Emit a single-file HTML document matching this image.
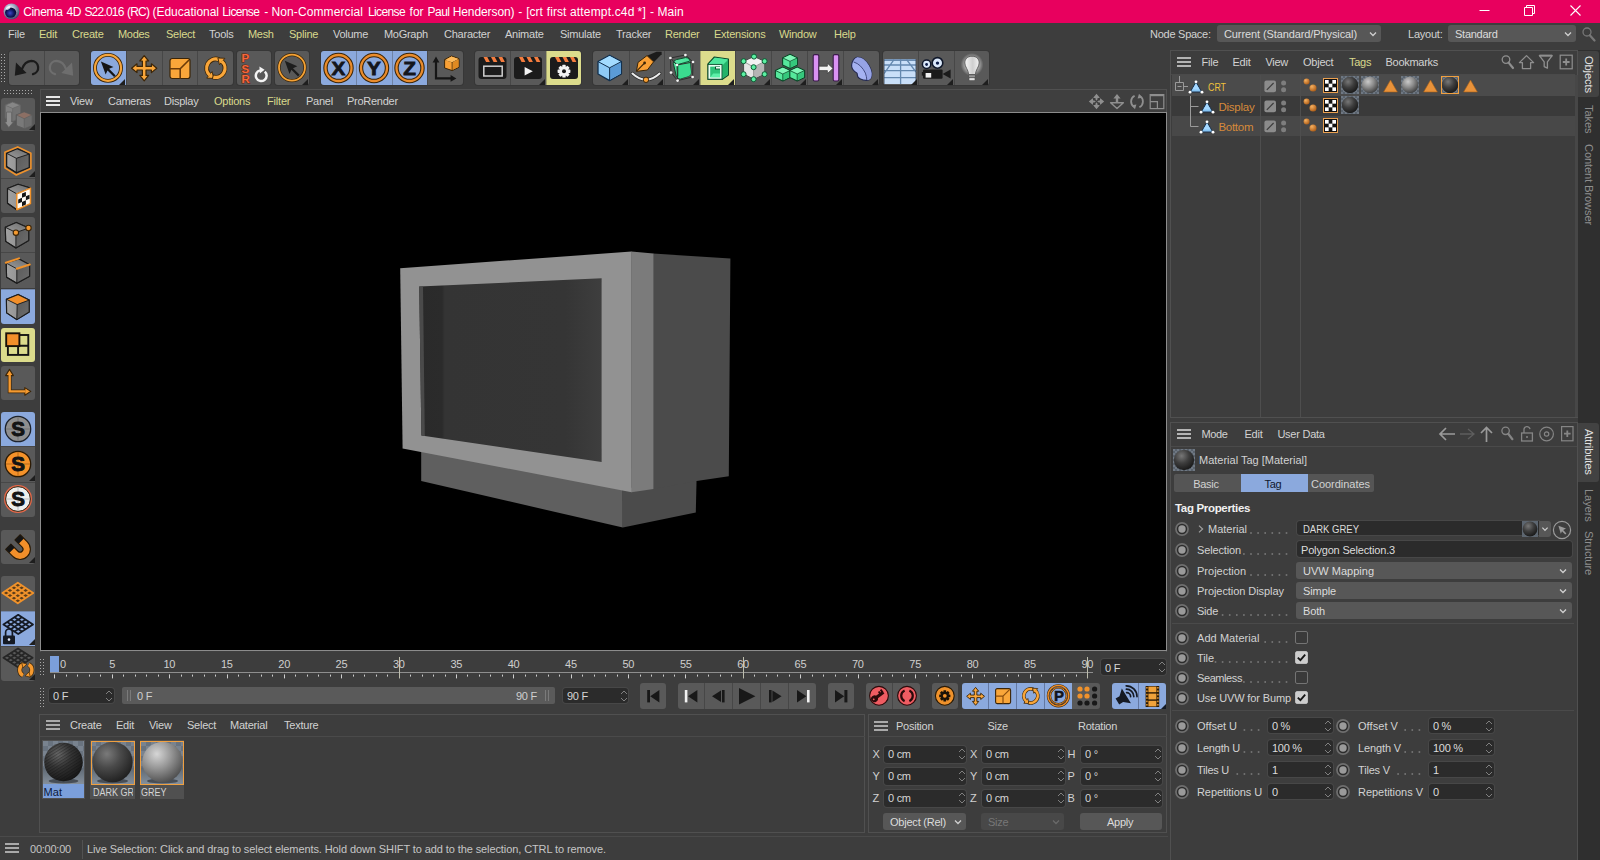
<!DOCTYPE html>
<html><head><meta charset="utf-8"><title>Cinema 4D</title>
<style>
html,body{margin:0;padding:0;}
body{width:1600px;height:860px;overflow:hidden;background:#3d3d3d;position:relative;font-family:"Liberation Sans",sans-serif;font-size:11px;color:#d2d2d2;}
div,span,svg{position:absolute;display:block;}
span{white-space:nowrap;}
</style></head><body>
<div style="left:0px;top:0px;width:1600px;height:23px;background:#e8005e;"></div>
<svg style="left:3px;top:3px;" width="17" height="17" viewBox="0 0 17 17">
<defs><radialGradient id="lg1" cx="40%" cy="35%" r="70%"><stop offset="0" stop-color="#ffffff"/><stop offset="0.35" stop-color="#b9c1d8"/><stop offset="1" stop-color="#3a3f63"/></radialGradient>
<radialGradient id="lg2" cx="45%" cy="55%" r="60%"><stop offset="0" stop-color="#3c46c8"/><stop offset="0.6" stop-color="#10145a"/><stop offset="1" stop-color="#05061e"/></radialGradient></defs>
<circle cx="8.5" cy="8.5" r="8" fill="url(#lg1)"/>
<ellipse cx="7.6" cy="9.6" rx="5.6" ry="5.2" fill="url(#lg2)"/>
<ellipse cx="5.2" cy="5" rx="2.6" ry="1.4" fill="#fff" opacity="0.8" transform="rotate(-30 5.2 5)"/>
</svg>
<span style="left:23.2px;top:3.5px;line-height:16px;font-size:12px;color:#ffffff;letter-spacing:-0.341px;">Cinema</span>
<span style="left:66.6px;top:3.5px;line-height:16px;font-size:12px;color:#ffffff;letter-spacing:-0.420px;">4D</span>
<span style="left:84.4px;top:3.5px;line-height:16px;font-size:12px;color:#ffffff;letter-spacing:-0.787px;">S22.016</span>
<span style="left:126.9px;top:3.5px;line-height:16px;font-size:12px;color:#ffffff;letter-spacing:-0.756px;">(RC)</span>
<span style="left:152.5px;top:3.5px;line-height:16px;font-size:12px;color:#ffffff;letter-spacing:-0.017px;">(Educational</span>
<span style="left:222.3px;top:3.5px;line-height:16px;font-size:12px;color:#ffffff;letter-spacing:-0.623px;">License</span>
<span style="left:264.2px;top:3.5px;line-height:16px;font-size:12px;color:#ffffff;letter-spacing:-0.597px;">-</span>
<span style="left:271.5px;top:3.5px;line-height:16px;font-size:12px;color:#ffffff;letter-spacing:0.106px;">Non-Commercial</span>
<span style="left:367.9px;top:3.5px;line-height:16px;font-size:12px;color:#ffffff;letter-spacing:-0.608px;">License</span>
<span style="left:409.6px;top:3.5px;line-height:16px;font-size:12px;color:#ffffff;letter-spacing:-0.002px;">for</span>
<span style="left:427.5px;top:3.5px;line-height:16px;font-size:12px;color:#ffffff;letter-spacing:-0.504px;">Paul</span>
<span style="left:452.7px;top:3.5px;line-height:16px;font-size:12px;color:#ffffff;letter-spacing:-0.090px;">Henderson)</span>
<span style="left:518.3px;top:3.5px;line-height:16px;font-size:12px;color:#ffffff;letter-spacing:-0.597px;">-</span>
<span style="left:526.2px;top:3.5px;line-height:16px;font-size:12px;color:#ffffff;letter-spacing:0.034px;">[crt</span>
<span style="left:546.75px;top:3.5px;line-height:16px;font-size:12px;color:#ffffff;letter-spacing:0.084px;">first</span>
<span style="left:570px;top:3.5px;line-height:16px;font-size:12px;color:#ffffff;letter-spacing:0.163px;">attempt.c4d</span>
<span style="left:637.5px;top:3.5px;line-height:16px;font-size:12px;color:#ffffff;letter-spacing:0.373px;">*]</span>
<span style="left:650px;top:3.5px;line-height:16px;font-size:12px;color:#ffffff;letter-spacing:-0.597px;">-</span>
<span style="left:657.5px;top:3.5px;line-height:16px;font-size:12px;color:#ffffff;letter-spacing:0.060px;">Main</span>
<svg style="left:1474px;top:0px;" width="126" height="23" viewBox="0 0 126 23">
<path d="M5.5 10.5 H15.5" stroke="#fff" stroke-width="1" fill="none"/>
<path d="M50.5 7.5 h8 v8 h-8 z M52.5 7.5 v-2 h8 v8 h-2" stroke="#fff" stroke-width="1" fill="none"/>
<path d="M96.5 5.5 l10 10 M106.5 5.5 l-10 10" stroke="#fff" stroke-width="1.1" fill="none"/>
</svg>
<span style="left:8px;top:26.0px;line-height:16px;font-size:11px;color:#d2d2d2;letter-spacing:-0.199px;">File</span>
<span style="left:39px;top:26.0px;line-height:16px;font-size:11px;color:#d9d98c;letter-spacing:-0.213px;">Edit</span>
<span style="left:72px;top:26.0px;line-height:16px;font-size:11px;color:#d9d98c;letter-spacing:-0.248px;">Create</span>
<span style="left:118px;top:26.0px;line-height:16px;font-size:11px;color:#d9d98c;letter-spacing:-0.297px;">Modes</span>
<span style="left:166px;top:26.0px;line-height:16px;font-size:11px;color:#d9d98c;letter-spacing:-0.229px;">Select</span>
<span style="left:209px;top:26.0px;line-height:16px;font-size:11px;color:#d2d2d2;letter-spacing:-0.231px;">Tools</span>
<span style="left:248px;top:26.0px;line-height:16px;font-size:11px;color:#d9d98c;letter-spacing:-0.303px;">Mesh</span>
<span style="left:289px;top:26.0px;line-height:16px;font-size:11px;color:#d9d98c;letter-spacing:-0.229px;">Spline</span>
<span style="left:333px;top:26.0px;line-height:16px;font-size:11px;color:#d2d2d2;letter-spacing:-0.275px;">Volume</span>
<span style="left:384px;top:26.0px;line-height:16px;font-size:11px;color:#d2d2d2;letter-spacing:-0.295px;">MoGraph</span>
<span style="left:444px;top:26.0px;line-height:16px;font-size:11px;color:#d2d2d2;letter-spacing:-0.241px;">Character</span>
<span style="left:505px;top:26.0px;line-height:16px;font-size:11px;color:#d2d2d2;letter-spacing:-0.259px;">Animate</span>
<span style="left:560px;top:26.0px;line-height:16px;font-size:11px;color:#d2d2d2;letter-spacing:-0.241px;">Simulate</span>
<span style="left:616px;top:26.0px;line-height:16px;font-size:11px;color:#d2d2d2;letter-spacing:-0.237px;">Tracker</span>
<span style="left:665px;top:26.0px;line-height:16px;font-size:11px;color:#d9d98c;letter-spacing:-0.271px;">Render</span>
<span style="left:714px;top:26.0px;line-height:16px;font-size:11px;color:#d9d98c;letter-spacing:-0.242px;">Extensions</span>
<span style="left:779px;top:26.0px;line-height:16px;font-size:11px;color:#d9d98c;letter-spacing:-0.293px;">Window</span>
<span style="left:834px;top:26.0px;line-height:16px;font-size:11px;color:#d9d98c;letter-spacing:-0.254px;">Help</span>
<span style="left:1150px;top:26.0px;line-height:16px;font-size:11px;color:#d2d2d2;letter-spacing:-0.260px;">Node Space:</span>
<div style="left:1217px;top:25px;width:164px;height:17px;background:#575757;border-radius:3px;"></div>
<span style="left:1224px;top:26.0px;line-height:16px;font-size:11px;color:#dcdcdc;letter-spacing:-0.101px;">Current (Standard/Physical)</span>
<svg style="left:1366.5px;top:28.5px;" width="12" height="10" viewBox="0 0 12 10"><path d="M3.0 3.5 L6 6.5 L9.0 3.5" fill="none" stroke="#d0d0d0" stroke-width="1.3"/></svg>
<span style="left:1408px;top:26.0px;line-height:16px;font-size:11px;color:#d2d2d2;letter-spacing:-0.232px;">Layout:</span>
<div style="left:1448px;top:25px;width:128px;height:17px;background:#575757;border-radius:3px;"></div>
<span style="left:1455px;top:26.0px;line-height:16px;font-size:11px;color:#dcdcdc;letter-spacing:-0.251px;">Standard</span>
<svg style="left:1561.5px;top:28.5px;" width="12" height="10" viewBox="0 0 12 10"><path d="M3.0 3.5 L6 6.5 L9.0 3.5" fill="none" stroke="#d0d0d0" stroke-width="1.3"/></svg>
<svg style="left:1581px;top:26px;" width="16" height="16" viewBox="0 0 16 16"><circle cx="6" cy="6" r="4" fill="none" stroke="#777" stroke-width="1.3"/><path d="M8.8 9.2 L13.5 14.5" stroke="#777" stroke-width="2.2" stroke-linecap="round"/></svg>
<svg style="left:1px;top:54px;" width="6" height="30" viewBox="0 0 6 30"><defs><pattern id="dp1" width="3" height="3" patternUnits="userSpaceOnUse"><rect width="1" height="1" fill="#a8a8a8"/></pattern></defs><rect width="6" height="30" fill="url(#dp1)"/></svg>
<div style="left:9px;top:51px;width:70px;height:34px;background:#595959;border-radius:3px;box-shadow:0 0 0 1px #373737;"></div>
<div style="left:91px;top:51px;width:142px;height:34px;background:#595959;border-radius:3px;box-shadow:0 0 0 1px #373737;"></div>
<div style="left:237px;top:51px;width:34px;height:34px;background:#595959;border-radius:3px;box-shadow:0 0 0 1px #373737;"></div>
<div style="left:275px;top:51px;width:34px;height:34px;background:#595959;border-radius:3px;box-shadow:0 0 0 1px #373737;"></div>
<div style="left:321px;top:51px;width:142px;height:34px;background:#595959;border-radius:3px;box-shadow:0 0 0 1px #373737;"></div>
<div style="left:475px;top:51px;width:106px;height:34px;background:#595959;border-radius:3px;box-shadow:0 0 0 1px #373737;"></div>
<div style="left:593px;top:51px;width:286px;height:34px;background:#595959;border-radius:3px;box-shadow:0 0 0 1px #373737;"></div>
<div style="left:883px;top:51px;width:106px;height:34px;background:#595959;border-radius:3px;box-shadow:0 0 0 1px #373737;"></div>
<svg style="left:10px;top:51px;" width="34" height="34" viewBox="0 0 34 34"><path d="M12 18 Q14.6 10.4 21.4 9.8 A6.8 6.8 0 0 1 23 23.2" fill="none" stroke="#1b1b1b" stroke-width="2.3" stroke-linecap="round"/>
<path d="M4.8 24.8 L6 11.6 L16.6 22 Z" fill="#1b1b1b"/></svg>
<div style="left:44px;top:51px;width:1px;height:34px;background:#474747;"></div>
<svg style="left:44px;top:51px;" width="34" height="34" viewBox="0 0 34 34"><path d="M22 18 Q19.4 10.4 12.6 9.8 A6.8 6.8 0 0 0 11 23.2" fill="none" stroke="#6e6e6e" stroke-width="2.3" stroke-linecap="round"/>
<path d="M29.2 24.8 L28 11.6 L17.4 22 Z" fill="#6e6e6e"/></svg>
<div style="left:91px;top:51px;width:34.5px;height:34px;background:#8ba9dd;border-radius:3px 0px 0px 3px;"></div>
<svg style="left:91px;top:51px;" width="34" height="34" viewBox="0 0 34 34"><circle cx="17" cy="16.9" r="13" fill="none" stroke="#3b2508" stroke-width="3.9"/>
<circle cx="17" cy="16.9" r="13" fill="none" stroke="#f5a53c" stroke-width="2.2"/><path d="M9.90 10.40 L22.44 15.94 L18.08 17.79 L24.68 24.39 L23.10 25.98 L16.50 19.38 L14.65 23.60 Z" fill="#151515"/></svg>
<svg style="left:118.5px;top:79px;" width="6" height="6" viewBox="0 0 6 6"><path d="M6 0 V6 H0 Z" fill="#1e1e1e"/></svg>
<div style="left:126px;top:51px;width:1px;height:34px;background:#474747;"></div>
<svg style="left:127px;top:51px;" width="34" height="34" viewBox="0 0 34 34"><g transform="translate(0.2,0.2)"><path d="M17 4.4 L21.4 9.8 L18.8 9.8 L18.8 15.2 L24.2 15.2 L24.2 12.6 L29.6 17 L24.2 21.4 L24.2 18.8 L18.8 18.8 L18.8 24.2 L21.4 24.2 L17 29.6 L12.6 24.2 L15.2 24.2 L15.2 18.8 L9.8 18.8 L9.8 21.4 L4.4 17 L9.8 12.6 L9.8 15.2 L15.2 15.2 L15.2 9.8 L12.6 9.8 Z" fill="#f9a63a" stroke="#3b2508" stroke-width="1.2" stroke-linejoin="round"/></g></svg>
<div style="left:162px;top:51px;width:1px;height:34px;background:#474747;"></div>
<svg style="left:162px;top:51px;" width="34" height="34" viewBox="0 0 34 34"><rect x="8" y="7.5" width="20" height="20" rx="2.2" fill="#f9a63a" stroke="#3b2508" stroke-width="1.2"/>
<path d="M8 17.8 H18.2 V27.5 M18.2 17.8 L27 9" fill="none" stroke="#6a3a08" stroke-width="1.6"/></svg>
<div style="left:197px;top:51px;width:1px;height:34px;background:#474747;"></div>
<svg style="left:198px;top:51px;" width="34" height="34" viewBox="0 0 34 34"><path d="M21.10 8.61 A9.2 9.2 0 0 0 11.89 24.25" fill="none" stroke="#3b2508" stroke-width="4.7"/><path d="M15.72 27.46 L8.73 27.08 L14.13 20.64 Z" fill="#f9a63a" stroke="#3b2508" stroke-width="0.90" stroke-linejoin="round"/><path d="M20.34 8.36 A9.2 9.2 0 0 0 11.89 24.25" fill="none" stroke="#f9a63a" stroke-width="3.3"/><path d="M14.50 25.79 A9.2 9.2 0 0 0 23.71 10.15" fill="none" stroke="#3b2508" stroke-width="4.7"/><path d="M19.88 6.94 L26.87 7.32 L21.47 13.76 Z" fill="#f9a63a" stroke="#3b2508" stroke-width="0.90" stroke-linejoin="round"/><path d="M15.26 26.04 A9.2 9.2 0 0 0 23.71 10.15" fill="none" stroke="#f9a63a" stroke-width="3.3"/></svg>
<svg style="left:237px;top:51px;" width="34" height="34" viewBox="0 0 34 34"><g font-family="Liberation Sans" font-weight="bold" font-size="11.6" fill="#f4683c" stroke="#6a200a" stroke-width="1.1" paint-order="stroke">
<text x="4.6" y="11.2">P</text><text x="4.6" y="21.6">S</text><text x="4.4" y="31.8">R</text></g>
<path d="M27.8 20.6 A5.4 5.4 0 1 1 23 19.4" fill="none" stroke="#f4f4f4" stroke-width="2.5"/>
<path d="M22.4 15.6 L27.6 18.8 L22.8 22.4 Z" fill="#f4f4f4"/></svg>
<svg style="left:275px;top:51px;" width="34" height="34" viewBox="0 0 34 34"><circle cx="17" cy="16.6" r="13" fill="none" stroke="#3b2508" stroke-width="3.2"/>
<circle cx="17" cy="16.6" r="13" fill="none" stroke="#f5a235" stroke-width="1.8"/><path d="M9.80 9.80 L22.34 15.34 L17.98 17.19 L24.58 23.79 L23.00 25.38 L16.40 18.78 L14.55 23.00 Z" fill="#1d1d1d"/></svg>
<svg style="left:302px;top:79px;" width="6" height="6" viewBox="0 0 6 6"><path d="M6 0 V6 H0 Z" fill="#1e1e1e"/></svg>
<div style="left:321px;top:51px;width:35px;height:34px;background:#8ba9dd;border-radius:3px 0px 0px 3px;"></div>
<svg style="left:322px;top:51px;" width="34" height="34" viewBox="0 0 34 34"><circle cx="16.5" cy="17" r="13" fill="none" stroke="#3b2508" stroke-width="4.4"/>
<circle cx="16.5" cy="17" r="13" fill="none" stroke="#ea8c2c" stroke-width="2.3"/>
<g transform="translate(16.5,23.7) scale(1.12,1)"><text x="0" y="0" text-anchor="middle" font-family="Liberation Sans" font-weight="bold" font-size="18.5" fill="#14161c" stroke="#14161c" stroke-width="0.8">X</text></g></svg>
<div style="left:356px;top:51px;width:36px;height:34px;background:#8ba9dd;border-radius:0px 0px 0px 0px;"></div>
<div style="left:356px;top:51px;width:1px;height:34px;background:rgba(60,60,60,0.35);"></div>
<svg style="left:357px;top:51px;" width="34" height="34" viewBox="0 0 34 34"><circle cx="17" cy="17" r="13" fill="none" stroke="#3b2508" stroke-width="4.4"/>
<circle cx="17" cy="17" r="13" fill="none" stroke="#ea8c2c" stroke-width="2.3"/>
<g transform="translate(17,23.7) scale(1.12,1)"><text x="0" y="0" text-anchor="middle" font-family="Liberation Sans" font-weight="bold" font-size="18.5" fill="#14161c" stroke="#14161c" stroke-width="0.8">Y</text></g></svg>
<div style="left:392px;top:51px;width:35px;height:34px;background:#8ba9dd;border-radius:0px 0px 0px 0px;"></div>
<div style="left:392px;top:51px;width:1px;height:34px;background:rgba(60,60,60,0.35);"></div>
<svg style="left:392px;top:51px;" width="34" height="34" viewBox="0 0 34 34"><circle cx="17.5" cy="17" r="13" fill="none" stroke="#3b2508" stroke-width="4.4"/>
<circle cx="17.5" cy="17" r="13" fill="none" stroke="#ea8c2c" stroke-width="2.3"/>
<g transform="translate(17.5,23.7) scale(1.12,1)"><text x="0" y="0" text-anchor="middle" font-family="Liberation Sans" font-weight="bold" font-size="18.5" fill="#14161c" stroke="#14161c" stroke-width="0.8">Z</text></g></svg>
<div style="left:427px;top:51px;width:1px;height:34px;background:#474747;"></div>
<svg style="left:428px;top:51px;" width="34" height="34" viewBox="0 0 34 34"><path d="M8 10 V27.4 H24" fill="none" stroke="#161616" stroke-width="2.2"/>
<path d="M4.6 11.4 L8 5.6 L11.4 11.4 Z M22.6 24 L28.4 27.4 L22.6 30.8 Z" fill="#161616"/>
<path d="M16.6 8.6 L23.4 5 L31 7.6 L31 16.2 L24.2 19.6 L16.6 17 Z" fill="#f9a035" stroke="#3b2508" stroke-width="1"/>
<path d="M16.6 8.6 L24.2 11 L31 7.6 M24.2 11 V19.6" fill="none" stroke="#3b2508" stroke-width="0.9"/>
<path d="M17.1 9.2 L24 11.3 L30.5 8 L23.4 5.6 Z" fill="#fdb95a"/>
<path d="M24.7 11.5 L30.5 8.6 V15.9 L24.7 18.8 Z" fill="#e08a22"/></svg>
<svg style="left:476px;top:51px;" width="34" height="34" viewBox="0 0 34 34"><rect x="2.5" y="6" width="28" height="22" rx="3" fill="#1b1b1b"/><path d="M7.5 6 h3.8 l2.6 5 h-3.8 Z" fill="#f47c3e"/><path d="M15.0 6 h3.8 l2.6 5 h-3.8 Z" fill="#f47c3e"/><path d="M22.5 6 h3.8 l2.6 5 h-3.8 Z" fill="#f47c3e"/><rect x="7.8" y="15.2" width="18.4" height="9.8" fill="none" stroke="#cfcfcf" stroke-width="1.5"/></svg>
<div style="left:510px;top:51px;width:1px;height:34px;background:#474747;"></div>
<svg style="left:511px;top:51px;" width="34" height="34" viewBox="0 0 34 34"><rect x="3" y="6" width="28" height="22" rx="3" fill="#1b1b1b"/><path d="M8 6 h3.8 l2.6 5 h-3.8 Z" fill="#f47c3e"/><path d="M15.5 6 h3.8 l2.6 5 h-3.8 Z" fill="#f47c3e"/><path d="M23 6 h3.8 l2.6 5 h-3.8 Z" fill="#f47c3e"/><path d="M13.6 16 V24.6 L21.8 20.3 Z" fill="#f2f2f2"/></svg>
<svg style="left:539px;top:79px;" width="6" height="6" viewBox="0 0 6 6"><path d="M6 0 V6 H0 Z" fill="#1e1e1e"/></svg>
<div style="left:546px;top:51px;width:35px;height:34px;background:#dcdc8c;border-radius:0px 3px 3px 0px;"></div>
<div style="left:546px;top:51px;width:1px;height:34px;background:rgba(60,60,60,0.35);"></div>
<svg style="left:546px;top:51px;" width="34" height="34" viewBox="0 0 34 34"><rect x="4" y="6" width="28" height="22" rx="3" fill="#1b1b1b"/><path d="M9 6 h3.8 l2.6 5 h-3.8 Z" fill="#f47c3e"/><path d="M16.5 6 h3.8 l2.6 5 h-3.8 Z" fill="#f47c3e"/><path d="M24 6 h3.8 l2.6 5 h-3.8 Z" fill="#f47c3e"/><g transform="translate(18,20.2)"><g fill="#f4f4f4"><rect x="-1.7" y="-6.4" width="3.4" height="12.8" rx="0.6" transform="rotate(0)"/><rect x="-1.7" y="-6.4" width="3.4" height="12.8" rx="0.6" transform="rotate(45)"/><rect x="-1.7" y="-6.4" width="3.4" height="12.8" rx="0.6" transform="rotate(90)"/><rect x="-1.7" y="-6.4" width="3.4" height="12.8" rx="0.6" transform="rotate(135)"/><circle r="4.7"/></g><circle r="2" fill="#1b1b1b"/></g></svg>
<svg style="left:594px;top:51px;" width="34" height="34" viewBox="0 0 34 34"><path d="M15.6 4.2 L27.4 10.6 V23 L15.6 29.6 L4 23 V10.6 Z" fill="#8fcbf7" stroke="#12304e" stroke-width="1.3" stroke-linejoin="round"/>
<path d="M15.6 4.9 L26.6 10.8 L15.6 16.6 L4.8 10.8 Z" fill="#a3dbff"/>
<path d="M15.9 17.2 L26.8 11.5 V22.6 L15.9 28.7 Z" fill="#5b9bd6"/>
<path d="M4 10.6 L15.6 16.8 L27.4 10.6 M15.6 16.8 V29.4" fill="none" stroke="#12304e" stroke-width="1"/></svg>
<svg style="left:622px;top:79px;" width="6" height="6" viewBox="0 0 6 6"><path d="M6 0 V6 H0 Z" fill="#1e1e1e"/></svg>
<div style="left:629px;top:51px;width:1px;height:34px;background:#474747;"></div>
<svg style="left:630px;top:51px;" width="34" height="34" viewBox="0 0 34 34"><path d="M2.4 22.6 Q16 35 29.6 22.6" fill="none" stroke="#2a2a2a" stroke-width="3.4" stroke-linecap="round"/>
<path d="M2.4 22.6 Q16 35 29.6 22.6" fill="none" stroke="#ececec" stroke-width="2" stroke-linecap="round"/>
<circle cx="16" cy="28.8" r="2.7" fill="#f9a035" stroke="#3b2508" stroke-width="1"/>
<path d="M17 4.8 L26.5 0.8 L31.6 0.8 L31.6 3.2 L24 11 Z" fill="#1b1b1b"/>
<path d="M6.4 20.4 L8 11.4 L17 4.6 L23.6 10.8 L17.4 19 Z" fill="#f9a035" stroke="#3b2508" stroke-width="1" stroke-linejoin="round"/>
<path d="M6.6 20.2 L14 12.6" stroke="#3b2508" stroke-width="1.2"/>
<circle cx="14.6" cy="12" r="1.4" fill="#3b2508"/></svg>
<svg style="left:657px;top:79px;" width="6" height="6" viewBox="0 0 6 6"><path d="M6 0 V6 H0 Z" fill="#1e1e1e"/></svg>
<div style="left:664px;top:51px;width:1px;height:34px;background:#474747;"></div>
<svg style="left:665px;top:51px;" width="34" height="34" viewBox="0 0 34 34"><defs><linearGradient id="sdg" x1="0" y1="0" x2="1" y2="1"><stop offset="0" stop-color="#62efac"/><stop offset="1" stop-color="#2fcf84"/></linearGradient></defs>
<path d="M8.4 12.6 Q8 9.4 11.4 8.6 L20.6 6.6 Q24.2 6.2 24.8 9.4 L26 21 Q26.2 24.2 23.2 25.2 L15.6 27.6 Q12.2 28.2 11.2 24.8 Z" fill="url(#sdg)" stroke="#0c4a2b" stroke-width="1"/>
<path d="M12.8 14 Q13.4 12.8 15 12.4 L24.8 10 L26 21 Q26.2 24.2 23.2 25.2 L15.6 27.6 Q13.4 28 12.8 25.6 Z" fill="#3bdb8f"/>
<path d="M9 11.2 Q11.4 13.6 13.4 13.4 L24.6 10.2 M12.8 14 V25.4" fill="none" stroke="#0c4a2b" stroke-width="0.9"/>
<path d="M5.4 7 L20.4 4 L28 11 L12 14 Z M5.4 7 L6 21.6 L12.6 29.6 L12 14 M12.6 29.6 L27.6 26 L28 11" fill="none" stroke="#2e2e2e" stroke-width="1"/><circle cx="5.4" cy="7" r="1.35" fill="#f4f4f4"/><circle cx="20.4" cy="4" r="1.35" fill="#f4f4f4"/><circle cx="28" cy="11" r="1.35" fill="#f4f4f4"/><circle cx="12" cy="14" r="1.35" fill="#f4f4f4"/><circle cx="6" cy="21.6" r="1.35" fill="#f4f4f4"/><circle cx="12.6" cy="29.6" r="1.35" fill="#f4f4f4"/><circle cx="27.6" cy="26" r="1.35" fill="#f4f4f4"/></svg>
<svg style="left:693px;top:79px;" width="6" height="6" viewBox="0 0 6 6"><path d="M6 0 V6 H0 Z" fill="#1e1e1e"/></svg>
<div style="left:700px;top:51px;width:35px;height:34px;background:#dcdc8c;border-radius:0px 0px 0px 0px;"></div>
<div style="left:700px;top:51px;width:1px;height:34px;background:rgba(60,60,60,0.35);"></div>
<svg style="left:700px;top:51px;" width="34" height="34" viewBox="0 0 34 34"><path d="M8 13 L14.4 6 L28.4 8 L28.4 24 L22 28.4 L8 28.4 Z" fill="#47df95" stroke="#0c4a2b" stroke-width="1.2" stroke-linejoin="round"/>
<path d="M8.6 13 L14.6 6.7 L27.6 8.5 L21.8 14.4 Z" fill="#4fe79d"/>
<path d="M22.4 14.6 L28 9 V23.8 L22.4 27.6 Z" fill="#24b36a"/>
<rect x="8" y="13.4" width="14" height="14.8" fill="#e9fff3" stroke="#0c4a2b" stroke-width="0.9"/>
<rect x="10.2" y="15.6" width="9.8" height="10.6" fill="#2fc47a"/>
<path d="M10.2 26.2 L13.2 22.4 H20 V26.2 Z" fill="#5cf0a8"/>
<path d="M15 15.6 V18.4 H20 V15.6 Z" fill="#0c4a2b"/><path d="M16 16 h4 v1.6 h-4z" fill="#e9fff3"/></svg>
<svg style="left:728px;top:79px;" width="6" height="6" viewBox="0 0 6 6"><path d="M6 0 V6 H0 Z" fill="#1e1e1e"/></svg>
<div style="left:735px;top:51px;width:1px;height:34px;background:#474747;"></div>
<svg style="left:736px;top:51px;" width="34" height="34" viewBox="0 0 34 34"><path d="M18 5.6 L28.6 10.4 V23 L17.6 28.2 L7.6 23 V10.4 Z" fill="#e4e4e4" stroke="#4a4a4a" stroke-width="1"/>
<path d="M17.6 16.4 L28.2 11 V22.8 L17.6 27.8 Z" fill="#b5b5b5"/>
<path d="M18 6.2 L27.6 10.6 L17.6 15.8 L8.4 10.6 Z" fill="#f2f2f2"/>
<path d="M7.6 10.4 L17.6 16.2 L28.6 10.4 M17.6 16.2 V28" fill="none" stroke="#8a8a8a" stroke-width="0.8"/><circle cx="18" cy="5.6" r="2.5" fill="#5cf0a3" stroke="#0d5a33" stroke-width="1"/><circle cx="7.6" cy="10.2" r="2.5" fill="#5cf0a3" stroke="#0d5a33" stroke-width="1"/><circle cx="28.6" cy="10.2" r="2.5" fill="#5cf0a3" stroke="#0d5a33" stroke-width="1"/><circle cx="17.6" cy="16.2" r="2.5" fill="#5cf0a3" stroke="#0d5a33" stroke-width="1"/><circle cx="7.6" cy="23.2" r="2.5" fill="#5cf0a3" stroke="#0d5a33" stroke-width="1"/><circle cx="28.6" cy="23.2" r="2.5" fill="#5cf0a3" stroke="#0d5a33" stroke-width="1"/><circle cx="17.6" cy="28.2" r="2.5" fill="#5cf0a3" stroke="#0d5a33" stroke-width="1"/></svg>
<svg style="left:764px;top:79px;" width="6" height="6" viewBox="0 0 6 6"><path d="M6 0 V6 H0 Z" fill="#1e1e1e"/></svg>
<div style="left:771px;top:51px;width:1px;height:34px;background:#474747;"></div>
<svg style="left:772px;top:51px;" width="34" height="34" viewBox="0 0 34 34"><path d="M18 3.37 L25.4 6.885 V13.915000000000001 L18 17.43 L10.6 13.915000000000001 V6.885 Z" fill="#55e89c" stroke="#0a4727" stroke-width="1.1" stroke-linejoin="round"/><path d="M18 4.07 L24.599999999999998 7.085 L18 10.4 L11.4 7.085 Z" fill="#7ff7b8"/><path d="M18.4 10.9 L24.799999999999997 7.685 V13.515 L18.4 16.63 Z" fill="#35c87c"/><path d="M10.6 6.885 L18 10.4 L25.4 6.885 M18 10.4 V17.43" fill="none" stroke="#0a4727" stroke-width="0.8"/><path d="M10.8 15.969999999999999 L18.200000000000003 19.485 V26.515 L10.8 30.03 L3.4000000000000004 26.515 V19.485 Z" fill="#55e89c" stroke="#0a4727" stroke-width="1.1" stroke-linejoin="round"/><path d="M10.8 16.669999999999998 L17.400000000000002 19.685 L10.8 23 L4.2 19.685 Z" fill="#7ff7b8"/><path d="M11.200000000000001 23.5 L17.6 20.285 V26.115000000000002 L11.200000000000001 29.23 Z" fill="#35c87c"/><path d="M3.4000000000000004 19.485 L10.8 23 L18.200000000000003 19.485 M10.8 23 V30.03" fill="none" stroke="#0a4727" stroke-width="0.8"/><path d="M25.2 15.969999999999999 L32.6 19.485 V26.515 L25.2 30.03 L17.799999999999997 26.515 V19.485 Z" fill="#55e89c" stroke="#0a4727" stroke-width="1.1" stroke-linejoin="round"/><path d="M25.2 16.669999999999998 L31.8 19.685 L25.2 23 L18.599999999999998 19.685 Z" fill="#7ff7b8"/><path d="M25.599999999999998 23.5 L32.0 20.285 V26.115000000000002 L25.599999999999998 29.23 Z" fill="#35c87c"/><path d="M17.799999999999997 19.485 L25.2 23 L32.6 19.485 M25.2 23 V30.03" fill="none" stroke="#0a4727" stroke-width="0.8"/></svg>
<svg style="left:800px;top:79px;" width="6" height="6" viewBox="0 0 6 6"><path d="M6 0 V6 H0 Z" fill="#1e1e1e"/></svg>
<div style="left:807px;top:51px;width:1px;height:34px;background:#474747;"></div>
<svg style="left:808px;top:51px;" width="34" height="34" viewBox="0 0 34 34"><rect x="5.2" y="3.6" width="5.6" height="26.4" rx="1.5" fill="#d991f3" stroke="#3a1a4a" stroke-width="1.1"/>
<rect x="25.2" y="3.6" width="5.6" height="26.4" rx="1.5" fill="#d991f3" stroke="#3a1a4a" stroke-width="1.1"/>
<path d="M11 15.2 H19.4 V12.2 L25 17.4 L19.4 22.6 V19.6 H11 Z" fill="#f2f2f2" stroke="#3a3a3a" stroke-width="0.7"/></svg>
<svg style="left:836px;top:79px;" width="6" height="6" viewBox="0 0 6 6"><path d="M6 0 V6 H0 Z" fill="#1e1e1e"/></svg>
<div style="left:843px;top:51px;width:1px;height:34px;background:#474747;"></div>
<svg style="left:844px;top:51px;" width="34" height="34" viewBox="0 0 34 34"><path d="M8.1 11.6 Q9.6 7.2 13 6.3 Q16.6 6 19.3 8.1 Q22.8 10.8 24.9 14.4 Q27.2 18.2 27.7 22.1 Q28 25.6 26.6 27.7 Q24.8 29.6 22.1 29.4 Q19 29.2 16.5 28 Q14.6 27 13.7 25.6 Q13.4 23.8 13 22.1 Q11 20.8 9.5 19.3 Q8.2 17.8 7.7 15.8 Q7.4 13.6 8.1 11.6 Z" fill="#a6b2f2" stroke="#23284f" stroke-width="1.1" stroke-linejoin="round"/>
<path d="M9.5 10.9 Q13.6 12.2 16.5 15.1 Q19.6 18.2 21.4 22.1 Q22.6 25.4 22.8 29.1 Q25.6 29 26.6 27.7 Q28 25.6 27.7 22.1 Q27.2 18.2 24.9 14.4 Q22.8 10.8 19.3 8.1 Q16.6 6 13 6.3 Q10.6 7.6 9.5 10.9 Z" fill="#97a3e6"/>
<path d="M9.5 10.9 Q13.6 12.2 16.5 15.1 Q19.6 18.2 21.4 22.1 Q22.6 25.4 22.8 29.1" fill="none" stroke="#3a4278" stroke-width="0.9"/></svg>
<svg style="left:872px;top:79px;" width="6" height="6" viewBox="0 0 6 6"><path d="M6 0 V6 H0 Z" fill="#1e1e1e"/></svg>
<svg style="left:884px;top:51px;" width="34" height="34" viewBox="0 0 34 34"><rect x="0" y="8.2" width="32" height="24.8" fill="#c9dff8"/>
<rect x="0" y="8.2" width="32" height="1.8" fill="#6a8bb0"/>
<path d="M0 14 H32 M0 19.6 H32 M0 26.6 H32 M16.6 8.2 V33 M10 8.6 L0 22.6 M22.6 8.6 L32 21" fill="none" stroke="#6488ae" stroke-width="1.3"/>
<path d="M0.3 8.2 V33 M31.7 8.2 V33" stroke="#3a4f68" stroke-width="0.6"/></svg>
<svg style="left:911px;top:79px;" width="6" height="6" viewBox="0 0 6 6"><path d="M6 0 V6 H0 Z" fill="#1e1e1e"/></svg>
<div style="left:918px;top:51px;width:1px;height:34px;background:#474747;"></div>
<svg style="left:919px;top:51px;" width="34" height="34" viewBox="0 0 34 34"><circle cx="7.6" cy="13.3" r="4.2" fill="#dbe9fb" stroke="#10182a" stroke-width="1.5"/><circle cx="7.6" cy="13.5" r="1.4" fill="#0f1e4a"/>
<circle cx="18.5" cy="11.9" r="5.3" fill="#dbe9fb" stroke="#10182a" stroke-width="1.6"/><circle cx="18.5" cy="12.1" r="1.7" fill="#0f1e4a"/>
<rect x="4" y="18.4" width="19.6" height="9.4" rx="1.2" fill="#1a1a1a"/>
<rect x="2.8" y="21" width="2.4" height="3.6" fill="#1a1a1a"/>
<rect x="6.6" y="22" width="5.6" height="4.6" fill="#f0f0f0"/>
<path d="M23.6 23 L31.6 18.4 V27.6 Z" fill="#1a1a1a"/></svg>
<svg style="left:947px;top:79px;" width="6" height="6" viewBox="0 0 6 6"><path d="M6 0 V6 H0 Z" fill="#1e1e1e"/></svg>
<div style="left:954px;top:51px;width:1px;height:34px;background:#474747;"></div>
<svg style="left:954px;top:51px;" width="34" height="34" viewBox="0 0 34 34"><defs><radialGradient id="glow" cx="50%" cy="50%" r="50%"><stop offset="0.55" stop-color="#ffffff" stop-opacity="0.55"/><stop offset="1" stop-color="#ffffff" stop-opacity="0"/></radialGradient>
<linearGradient id="bulb" x1="0" y1="0" x2="1" y2="0"><stop offset="0" stop-color="#f6f6f6"/><stop offset="0.55" stop-color="#cfcfcf"/><stop offset="1" stop-color="#f4f4f4"/></linearGradient></defs>
<ellipse cx="18" cy="13.6" rx="11.4" ry="11.6" fill="url(#glow)"/>
<path d="M18 5.2 C23 5.2 25.2 8.6 25.2 12 C25.2 16 21.4 19 21.4 23.6 H14.6 C14.6 19 10.8 16 10.8 12 C10.8 8.6 13 5.2 18 5.2 Z" fill="url(#bulb)" stroke="#555" stroke-width="0.9"/>
<rect x="14.8" y="24" width="6.4" height="2.2" fill="#9c9c9c" stroke="#444" stroke-width="0.5"/>
<rect x="15" y="26.8" width="6" height="2.6" rx="0.8" fill="#e9e9e9" stroke="#444" stroke-width="0.5"/></svg>
<svg style="left:982px;top:79px;" width="6" height="6" viewBox="0 0 6 6"><path d="M6 0 V6 H0 Z" fill="#1e1e1e"/></svg>
<svg style="left:4px;top:90px;" width="30" height="6" viewBox="0 0 30 6"><defs><pattern id="dp2" width="3" height="3" patternUnits="userSpaceOnUse"><rect width="1" height="1" fill="#a8a8a8"/></pattern></defs><rect width="30" height="6" fill="url(#dp2)"/></svg>
<div style="left:1px;top:98px;width:34px;height:33px;background:#595959;border-radius:3px 3px 3px 3px;"></div>
<svg style="left:1px;top:98px;" width="34" height="34" viewBox="0 0 34 34"><g opacity="0.5"><path d="M11.60 4.10 L19.50 7.20 L19.50 20.00 L11.60 23.40 L4.10 20.00 L4.10 7.20 Z" fill="#a8a8a8" stroke="#6a6a6a" stroke-width="0.7" stroke-linejoin="round"/><path d="M11.60 4.10 L19.50 7.20 L11.60 10.40 L4.10 7.20 Z" fill="#b4b4b4"/><path d="M11.60 10.40 L19.50 7.20 L19.50 20.00 L11.60 23.40 Z" fill="#8c8c8c"/><path d="M4.10 7.20 L11.60 10.40 L19.50 7.20 M11.60 10.40 L11.60 23.40" fill="none" stroke="#6a6a6a" stroke-width="0.595"/><path d="M11.60 4.10 L19.50 7.20 L19.50 20.00 L11.60 23.40 L4.10 20.00 L4.10 7.20 Z" fill="none" stroke="#6a6a6a" stroke-width="0.7" stroke-linejoin="round"/><path d="M5.5 14.1 H10.6 V23.9 H12.5 L7.8 29.5 L3.7 23.9 H5.5 Z" fill="#c6c6c6" stroke="#5e5e5e" stroke-width="0.7"/><path d="M23.20 13.90 L31.10 16.90 L31.10 27.60 L23.20 30.70 L15.30 27.60 L15.30 16.90 Z" fill="#9a9a9a" stroke="#5a5a5a" stroke-width="0.7" stroke-linejoin="round"/><path d="M23.20 13.90 L31.10 16.90 L23.20 20.70 L15.30 16.90 Z" fill="#c08670"/><path d="M23.20 20.70 L31.10 16.90 L31.10 27.60 L23.20 30.70 Z" fill="#828282"/><path d="M15.30 16.90 L23.20 20.70 L31.10 16.90 M23.20 20.70 L23.20 30.70" fill="none" stroke="#5a5a5a" stroke-width="0.595"/><path d="M23.20 13.90 L31.10 16.90 L31.10 27.60 L23.20 30.70 L15.30 27.60 L15.30 16.90 Z" fill="none" stroke="#5a5a5a" stroke-width="0.7" stroke-linejoin="round"/></g></svg>
<svg style="left:29px;top:124px;" width="6" height="6" viewBox="0 0 6 6"><path d="M6 0 V6 H0 Z" fill="#1e1e1e"/></svg>
<div style="left:1px;top:144px;width:34px;height:34px;background:#595959;border-radius:3px 3px 0px 0px;"></div>
<svg style="left:1px;top:144px;" width="34" height="34" viewBox="0 0 34 34"><defs><linearGradient id="cgl" x1="0" y1="0" x2="1" y2="0"><stop offset="0" stop-color="#a2a2a2"/><stop offset="1" stop-color="#868686"/></linearGradient><linearGradient id="cgr" x1="0" y1="0" x2="1" y2="1"><stop offset="0" stop-color="#5a5a5a"/><stop offset="1" stop-color="#6e6e6e"/></linearGradient><linearGradient id="cgt" x1="0" y1="1" x2="1" y2="0"><stop offset="0" stop-color="#9c9c9c"/><stop offset="1" stop-color="#6c6c6c"/></linearGradient></defs><path d="M16.20 4.80 L28.20 10.10 L28.20 23.40 L15.30 28.70 L5.60 22.50 L5.60 9.30 Z" fill="url(#cgl)" stroke="#1c1c1c" stroke-width="1.1" stroke-linejoin="round"/><path d="M16.20 4.80 L28.20 10.10 L15.30 14.30 L5.60 9.30 Z" fill="url(#cgt)"/><path d="M15.30 14.30 L28.20 10.10 L28.20 23.40 L15.30 28.70 Z" fill="url(#cgr)"/><path d="M5.60 9.30 L15.30 14.30 L28.20 10.10 M15.30 14.30 L15.30 28.70" fill="none" stroke="#1c1c1c" stroke-width="0.935"/><path d="M16.20 4.80 L28.20 10.10 L28.20 23.40 L15.30 28.70 L5.60 22.50 L5.60 9.30 Z" fill="none" stroke="#1c1c1c" stroke-width="1.1" stroke-linejoin="round"/><path d="M16.7 2.9 L29.9 9.2 V24.4 L15.3 31 L3.9 23.9 V8.3 Z" fill="none" stroke="#f0922b" stroke-width="1.6" stroke-linejoin="round"/></svg>
<svg style="left:29px;top:171px;" width="6" height="6" viewBox="0 0 6 6"><path d="M6 0 V6 H0 Z" fill="#1e1e1e"/></svg>
<div style="left:1px;top:178px;width:34px;height:35px;background:#595959;border-radius:0px 0px 3px 3px;"></div>
<div style="left:1px;top:178px;width:34px;height:1px;background:#474747;"></div>
<svg style="left:1px;top:178px;" width="34" height="34" viewBox="0 0 34 34"><defs><linearGradient id="cgl" x1="0" y1="0" x2="1" y2="0"><stop offset="0" stop-color="#a2a2a2"/><stop offset="1" stop-color="#868686"/></linearGradient><linearGradient id="cgr" x1="0" y1="0" x2="1" y2="1"><stop offset="0" stop-color="#5a5a5a"/><stop offset="1" stop-color="#6e6e6e"/></linearGradient><linearGradient id="cgt" x1="0" y1="1" x2="1" y2="0"><stop offset="0" stop-color="#9c9c9c"/><stop offset="1" stop-color="#6c6c6c"/></linearGradient></defs><path d="M17.10 6.20 L29.50 10.10 L29.50 25.60 L15.80 31.80 L6.50 25.20 L6.50 10.60 Z" fill="url(#cgl)" stroke="#1c1c1c" stroke-width="1.1" stroke-linejoin="round"/><path d="M17.10 6.20 L29.50 10.10 L15.80 15.90 L6.50 10.60 Z" fill="url(#cgt)"/><path d="M15.80 15.90 L29.50 10.10 L29.50 25.60 L15.80 31.80 Z" fill="url(#cgr)"/><path d="M6.50 10.60 L15.80 15.90 L29.50 10.10 M15.80 15.90 L15.80 31.80" fill="none" stroke="#1c1c1c" stroke-width="0.935"/><path d="M17.10 6.20 L29.50 10.10 L29.50 25.60 L15.80 31.80 L6.50 25.20 L6.50 10.60 Z" fill="none" stroke="#1c1c1c" stroke-width="1.1" stroke-linejoin="round"/><path d="M15.8 15.9 L29.5 10.1 V25.6 L15.8 31.8 Z" fill="#fffaf2" stroke="#f0922b" stroke-width="1.5" stroke-linejoin="round"/>
<g fill="#151515" transform="translate(15.8,15.9) matrix(1,-0.423,0,1,0,0)">
<rect x="5.2" y="1.9" width="3.9" height="4.2"/><rect x="1.4" y="6.1" width="3.8" height="4.2"/><rect x="9.1" y="6.1" width="3.6" height="4.2"/><rect x="5.2" y="10.3" width="3.9" height="4.2"/></g></svg>
<div style="left:1px;top:217px;width:34px;height:35px;background:#595959;border-radius:3px 3px 0px 0px;"></div>
<svg style="left:1px;top:218px;" width="34" height="34" viewBox="0 0 34 34"><defs><linearGradient id="cgl" x1="0" y1="0" x2="1" y2="0"><stop offset="0" stop-color="#a2a2a2"/><stop offset="1" stop-color="#868686"/></linearGradient><linearGradient id="cgr" x1="0" y1="0" x2="1" y2="1"><stop offset="0" stop-color="#5a5a5a"/><stop offset="1" stop-color="#6e6e6e"/></linearGradient><linearGradient id="cgt" x1="0" y1="1" x2="1" y2="0"><stop offset="0" stop-color="#9c9c9c"/><stop offset="1" stop-color="#6c6c6c"/></linearGradient></defs><path d="M15.30 4.40 L27.70 10.10 L27.70 22.50 L14.90 30.00 L4.70 23.40 L4.30 9.25 Z" fill="url(#cgl)" stroke="#1c1c1c" stroke-width="1.1" stroke-linejoin="round"/><path d="M15.30 4.40 L27.70 10.10 L14.90 14.50 L4.30 9.25 Z" fill="url(#cgt)"/><path d="M14.90 14.50 L27.70 10.10 L27.70 22.50 L14.90 30.00 Z" fill="url(#cgr)"/><path d="M4.30 9.25 L14.90 14.50 L27.70 10.10 M14.90 14.50 L14.90 30.00" fill="none" stroke="#1c1c1c" stroke-width="0.935"/><path d="M15.30 4.40 L27.70 10.10 L27.70 22.50 L14.90 30.00 L4.70 23.40 L4.30 9.25 Z" fill="none" stroke="#1c1c1c" stroke-width="1.1" stroke-linejoin="round"/><circle cx="14.9" cy="14.7" r="2.7" fill="#f59a30" stroke="#3b2508" stroke-width="1.1"/><circle cx="27.5" cy="10" r="2.7" fill="#f59a30" stroke="#3b2508" stroke-width="1.1"/></svg>
<div style="left:1px;top:252px;width:34px;height:36px;background:#595959;border-radius:0px 0px 0px 0px;"></div>
<div style="left:1px;top:252px;width:34px;height:1px;background:#474747;"></div>
<svg style="left:1px;top:253px;" width="34" height="34" viewBox="0 0 34 34"><defs><linearGradient id="cgl" x1="0" y1="0" x2="1" y2="0"><stop offset="0" stop-color="#a2a2a2"/><stop offset="1" stop-color="#868686"/></linearGradient><linearGradient id="cgr" x1="0" y1="0" x2="1" y2="1"><stop offset="0" stop-color="#5a5a5a"/><stop offset="1" stop-color="#6e6e6e"/></linearGradient><linearGradient id="cgt" x1="0" y1="1" x2="1" y2="0"><stop offset="0" stop-color="#9c9c9c"/><stop offset="1" stop-color="#6c6c6c"/></linearGradient></defs><path d="M18.00 6.00 L28.60 11.80 L28.60 23.30 L15.80 30.30 L5.60 24.20 L5.20 10.00 Z" fill="url(#cgl)" stroke="#1c1c1c" stroke-width="1.1" stroke-linejoin="round"/><path d="M18.00 6.00 L28.60 11.80 L15.80 15.80 L5.20 10.00 Z" fill="url(#cgt)"/><path d="M15.80 15.80 L28.60 11.80 L28.60 23.30 L15.80 30.30 Z" fill="url(#cgr)"/><path d="M5.20 10.00 L15.80 15.80 L28.60 11.80 M15.80 15.80 L15.80 30.30" fill="none" stroke="#1c1c1c" stroke-width="0.935"/><path d="M18.00 6.00 L28.60 11.80 L28.60 23.30 L15.80 30.30 L5.60 24.20 L5.20 10.00 Z" fill="none" stroke="#1c1c1c" stroke-width="1.1" stroke-linejoin="round"/><path d="M4.8 9.8 L18 5.4 M15.8 15.7 L28.8 11.5" stroke="#f0922b" stroke-width="2" stroke-linecap="round"/></svg>
<div style="left:1px;top:289px;width:34px;height:35px;background:#8ba9dd;border-radius:0px 0px 3px 3px;"></div>
<div style="left:1px;top:289px;width:34px;height:1px;background:rgba(60,60,60,0.3);"></div>
<svg style="left:1px;top:290px;" width="34" height="34" viewBox="0 0 34 34"><defs><linearGradient id="cgl" x1="0" y1="0" x2="1" y2="0"><stop offset="0" stop-color="#a2a2a2"/><stop offset="1" stop-color="#868686"/></linearGradient><linearGradient id="cgr" x1="0" y1="0" x2="1" y2="1"><stop offset="0" stop-color="#5a5a5a"/><stop offset="1" stop-color="#6e6e6e"/></linearGradient><linearGradient id="cgt" x1="0" y1="1" x2="1" y2="0"><stop offset="0" stop-color="#9c9c9c"/><stop offset="1" stop-color="#6c6c6c"/></linearGradient></defs><path d="M17.10 4.40 L28.20 10.10 L28.20 22.00 L15.80 29.60 L5.60 22.90 L5.40 9.25 Z" fill="url(#cgl)" stroke="#1c1c1c" stroke-width="1.1" stroke-linejoin="round"/><path d="M17.10 4.40 L28.20 10.10 L16.20 14.60 L5.40 9.25 Z" fill="#f28f2a"/><path d="M16.20 14.60 L28.20 10.10 L28.20 22.00 L15.80 29.60 Z" fill="url(#cgr)"/><path d="M5.40 9.25 L16.20 14.60 L28.20 10.10 M16.20 14.60 L15.80 29.60" fill="none" stroke="#1c1c1c" stroke-width="0.935"/><path d="M17.10 4.40 L28.20 10.10 L28.20 22.00 L15.80 29.60 L5.60 22.90 L5.40 9.25 Z" fill="none" stroke="#1c1c1c" stroke-width="1.1" stroke-linejoin="round"/></svg>
<div style="left:1px;top:328px;width:34px;height:34px;background:#dcdc8c;border-radius:3px 3px 3px 3px;"></div>
<svg style="left:1px;top:328px;" width="34" height="34" viewBox="0 0 34 34"><rect x="6.9" y="7" width="20.4" height="19.9" fill="none" stroke="#151515" stroke-width="1.9"/>
<path d="M17.1 7 V26.9 M6.9 17.8 H27.3" stroke="#151515" stroke-width="1.9"/>
<rect x="5.2" y="5.3" width="13.2" height="12.8" fill="#f28f2a" stroke="#1a1208" stroke-width="1.9"/></svg>
<div style="left:1px;top:366px;width:34px;height:34px;background:#595959;border-radius:3px 3px 3px 3px;"></div>
<svg style="left:1px;top:366px;" width="34" height="34" viewBox="0 0 34 34"><path d="M8.7 8 V25.4 H25" fill="none" stroke="#3b2508" stroke-width="3.8"/>
<path d="M8.5 3.4 L12.4 9.6 H4.6 Z M29.8 25.4 L23.8 29.2 V21.6 Z" fill="#f59a30" stroke="#3b2508" stroke-width="1.1" stroke-linejoin="round"/>
<path d="M8.7 8.6 V25.4 H24.6" fill="none" stroke="#f59a30" stroke-width="2.4"/></svg>
<div style="left:1px;top:412px;width:34px;height:34px;background:#8ba9dd;border-radius:3px 3px 0px 0px;"></div>
<svg style="left:1px;top:412px;" width="34" height="34" viewBox="0 0 34 34"><circle cx="17" cy="17" r="12.7" fill="#8f8f8f" stroke="#1c222c" stroke-width="1.3"/><path d="M4.6 17 H29.4 M17 4.6 V29.4" stroke="#5a5a5a" stroke-width="0.7" opacity="0.7"/><text x="17" y="24.2" text-anchor="middle" font-family="Liberation Sans" font-weight="bold" font-size="20.5" fill="#141414" stroke="#141414" stroke-width="1.0" stroke-linejoin="round">S</text></svg>
<div style="left:1px;top:446px;width:34px;height:36px;background:#595959;border-radius:0px 0px 0px 0px;"></div>
<div style="left:1px;top:446px;width:34px;height:1px;background:#474747;"></div>
<svg style="left:1px;top:447px;" width="34" height="34" viewBox="0 0 34 34"><circle cx="17" cy="17" r="12.7" fill="#f5922a" stroke="#2a1a05" stroke-width="1.3"/><path d="M4.6 17 H29.4 M17 4.6 V29.4" stroke="#7a4208" stroke-width="0.7" opacity="0.7"/><text x="17" y="24.2" text-anchor="middle" font-family="Liberation Sans" font-weight="bold" font-size="20.5" fill="#141414" stroke="#141414" stroke-width="1.0" stroke-linejoin="round">S</text></svg>
<svg style="left:29px;top:475px;" width="6" height="6" viewBox="0 0 6 6"><path d="M6 0 V6 H0 Z" fill="#1e1e1e"/></svg>
<div style="left:1px;top:482px;width:34px;height:35px;background:#595959;border-radius:0px 0px 3px 3px;"></div>
<div style="left:1px;top:482px;width:34px;height:1px;background:#474747;"></div>
<svg style="left:1px;top:482px;" width="34" height="34" viewBox="0 0 34 34"><circle cx="17" cy="17" r="14" fill="#e8694a"/><circle cx="17" cy="17" r="12.4" fill="#eef0ee" stroke="#2a1a05" stroke-width="1.0"/><path d="M4.6 17 H29.4 M17 4.6 V29.4" stroke="#8a8a8a" stroke-width="0.7" opacity="0.7"/><text x="17" y="24.2" text-anchor="middle" font-family="Liberation Sans" font-weight="bold" font-size="20.5" fill="#141414" stroke="#141414" stroke-width="1.0" stroke-linejoin="round">S</text></svg>
<div style="left:1px;top:530px;width:34px;height:34px;background:#595959;border-radius:3px 3px 3px 3px;"></div>
<svg style="left:1px;top:530px;" width="34" height="34" viewBox="0 0 34 34"><g transform="translate(19.3,19.4) rotate(-45)">
<path d="M-10.3 -10.4 H-2.9 V-0.3 A2.9 2.9 0 0 0 2.9 -0.3 V-10.4 H10.3 V-0.3 A10.3 10.3 0 0 1 -10.3 -0.3 Z" fill="#f28f2a" stroke="#2a1a05" stroke-width="1.1" stroke-linejoin="round"/>
<rect x="-10.3" y="-10.4" width="7.4" height="5.2" fill="#151515"/><rect x="2.9" y="-10.4" width="7.4" height="5.2" fill="#151515"/></g></svg>
<svg style="left:29px;top:557px;" width="6" height="6" viewBox="0 0 6 6"><path d="M6 0 V6 H0 Z" fill="#1e1e1e"/></svg>
<div style="left:1px;top:576px;width:34px;height:35px;background:#595959;border-radius:3px 3px 0px 0px;"></div>
<svg style="left:1px;top:576px;" width="34" height="34" viewBox="0 0 34 34"><path d="M1.4000000000000004 17 L16.8 6.699999999999999 L32.2 17 L16.8 27.3 Z" fill="#5a3c1a" stroke="#f0922b" stroke-width="1.9" stroke-linejoin="round"/><path d="M5.25 19.57 L20.65 9.27 M5.25 14.43 L20.65 24.73 M9.10 22.15 L24.50 11.85 M9.10 11.85 L24.50 22.15 M12.95 24.73 L28.35 14.43 M12.95 9.27 L28.35 19.57 " fill="none" stroke="#f0922b" stroke-width="1.9"/></svg>
<div style="left:1px;top:611px;width:34px;height:35px;background:#8ba9dd;border-radius:0px 0px 0px 0px;"></div>
<div style="left:1px;top:611px;width:34px;height:1px;background:rgba(60,60,60,0.3);"></div>
<svg style="left:1px;top:612px;" width="34" height="34" viewBox="0 0 34 34"><path d="M2.3999999999999986 12.4 L17.2 2.8000000000000007 L32.0 12.4 L17.2 22.0 Z" fill="none" stroke="#151a24" stroke-width="1.8" stroke-linejoin="round"/><path d="M6.10 14.80 L20.90 5.20 M6.10 10.00 L20.90 19.60 M9.80 17.20 L24.60 7.60 M9.80 7.60 L24.60 17.20 M13.50 19.60 L28.30 10.00 M13.50 5.20 L28.30 14.80 " fill="none" stroke="#151a24" stroke-width="1.8"/><path d="M4.6 24 V20.4 A3.4 3.4 0 0 1 11.4 20.4 V24" fill="none" stroke="#151a24" stroke-width="1.7"/>
<rect x="2" y="23.4" width="12" height="8.8" rx="1" fill="#151a24"/><circle cx="8" cy="27.6" r="1.3" fill="#dfe6f5"/></svg>
<svg style="left:29px;top:639px;" width="6" height="6" viewBox="0 0 6 6"><path d="M6 0 V6 H0 Z" fill="#1e1e1e"/></svg>
<div style="left:1px;top:646px;width:34px;height:35px;background:#595959;border-radius:0px 0px 3px 3px;"></div>
<div style="left:1px;top:646px;width:34px;height:1px;background:#474747;"></div>
<svg style="left:1px;top:646px;" width="34" height="34" viewBox="0 0 34 34"><path d="M2.4000000000000004 11.8 L17 2.4000000000000004 L31.6 11.8 L17 21.200000000000003 Z" fill="none" stroke="#262626" stroke-width="1.8" stroke-linejoin="round"/><path d="M6.05 14.15 L20.65 4.75 M6.05 9.45 L20.65 18.85 M9.70 16.50 L24.30 7.10 M9.70 7.10 L24.30 16.50 M13.35 18.85 L27.95 9.45 M13.35 4.75 L27.95 14.15 " fill="none" stroke="#262626" stroke-width="1.8"/><g fill="none" stroke="#3b2508" stroke-width="4.8"><path d="M22 29.4 A6.2 6.2 0 0 1 22 18.4"/><path d="M27.6 18.4 A6.2 6.2 0 0 1 27.6 29.4"/></g>
<g fill="none" stroke="#f59a30" stroke-width="3.4"><path d="M22 29.4 A6.2 6.2 0 0 1 22 18.4"/><path d="M27.6 18.4 A6.2 6.2 0 0 1 27.6 29.4"/></g>
<path d="M20.6 16.6 L26 18 L22 21.8 Z M29.4 31.2 L24 29.8 L28 26 Z" fill="#f59a30" stroke="#3b2508" stroke-width="0.7"/></svg>
<svg style="left:29px;top:674px;" width="6" height="6" viewBox="0 0 6 6"><path d="M6 0 V6 H0 Z" fill="#1e1e1e"/></svg>
<div style="left:40px;top:89px;width:1127px;height:563px;background:#3f3f3f;box-sizing:border-box;border:1px solid #505050;border-bottom:none;"></div>
<div style="left:46px;top:96px;width:14px;height:2px;background:#e6e6e6;"></div>
<div style="left:46px;top:100px;width:14px;height:2px;background:#e6e6e6;"></div>
<div style="left:46px;top:104px;width:14px;height:2px;background:#e6e6e6;"></div>
<span style="left:70px;top:93.0px;line-height:16px;font-size:11px;color:#d2d2d2;letter-spacing:-0.266px;">View</span>
<span style="left:108px;top:93.0px;line-height:16px;font-size:11px;color:#d2d2d2;letter-spacing:-0.287px;">Cameras</span>
<span style="left:164px;top:93.0px;line-height:16px;font-size:11px;color:#d2d2d2;letter-spacing:-0.232px;">Display</span>
<span style="left:214px;top:93.0px;line-height:16px;font-size:11px;color:#d9d98c;letter-spacing:-0.244px;">Options</span>
<span style="left:267px;top:93.0px;line-height:16px;font-size:11px;color:#d9d98c;letter-spacing:-0.183px;">Filter</span>
<span style="left:306px;top:93.0px;line-height:16px;font-size:11px;color:#d2d2d2;letter-spacing:-0.253px;">Panel</span>
<span style="left:347px;top:93.0px;line-height:16px;font-size:11px;color:#d2d2d2;letter-spacing:-0.266px;">ProRender</span>
<svg style="left:1088px;top:93px;" width="17" height="17" viewBox="0 0 17 17"><g fill="#8f8f8f"><path d="M8.5 0.8 L12 5 H5 Z M8.5 16.2 L12 12 H5 Z M0.8 8.5 L5 5 V12 Z M16.2 8.5 L12 5 V12 Z"/><rect x="7.5" y="4" width="2" height="9"/><rect x="4" y="7.5" width="9" height="2"/></g><path d="M5 5 L12 12 M12 5 L5 12" stroke="#3f3f3f" stroke-width="1.1"/></svg>
<svg style="left:1109px;top:93px;" width="16" height="17" viewBox="0 0 16 17"><path d="M8 1 L11.6 5.4 H9.2 V9 H6.8 V5.4 H4.4 Z" fill="#8f8f8f"/><path d="M1.6 9.8 H14.4 L8 15.6 Z" fill="none" stroke="#8f8f8f" stroke-width="1.4" stroke-linejoin="round"/></svg>
<svg style="left:1129px;top:93px;" width="16" height="17" viewBox="0 0 16 17"><g fill="none" stroke="#8f8f8f" stroke-width="1.8"><path d="M5.6 2.8 A6.4 6.4 0 0 0 5.2 14"/><path d="M10.4 14.2 A6.4 6.4 0 0 0 10.8 3"/></g><path d="M2.6 12.2 L7.4 11.6 L6 16.2 Z M13.4 4.8 L8.6 5.4 L10 0.8 Z" fill="#8f8f8f"/></svg>
<svg style="left:1149px;top:93px;" width="16" height="17" viewBox="0 0 16 17"><rect x="1.2" y="1.6" width="13.6" height="14" fill="none" stroke="#8f8f8f" stroke-width="1.2"/><rect x="1.2" y="1.6" width="13.6" height="1.6" fill="#8f8f8f"/><path d="M1.2 8.6 H8.4 V15.6" fill="none" stroke="#8f8f8f" stroke-width="1.2"/></svg>
<div style="left:40px;top:112px;width:1126.5px;height:539px;background:#000;box-sizing:border-box;border:1px solid #8c8c8c;"></div>
<svg style="left:41px;top:113px;" width="1124" height="537" viewBox="0 0 1124 537">
<defs>
<linearGradient id="scr" x1="0" y1="0" x2="1" y2="0"><stop offset="0" stop-color="#2a2a2a"/><stop offset="0.125" stop-color="#2b2b2b"/><stop offset="0.14" stop-color="#343434"/><stop offset="0.8" stop-color="#353535"/><stop offset="1" stop-color="#3e3e3e"/></linearGradient>
</defs>
<g transform="translate(-41,-113)">
<path d="M421.2 450 L622.8 489.8 L622.8 527.6 L421.2 481 Z" fill="#5f5f5f"/>
<path d="M622.8 489 L696.6 478 L695.8 512.6 L622.8 527.6 Z" fill="#4b4b4b"/>
<path d="M653 253.6 L730.4 258.4 L728.8 476.2 L696.6 481 L653 489 Z" fill="#4b4b4b"/>
<path d="M631.4 251.6 L653.4 253.6 L653.4 489 L631.4 492.2 Z" fill="#7b7b7b"/>
<path d="M400.2 268.2 L631.6 251.6 L631.6 492.2 L402.6 448.4 Z" fill="#929292"/>
<path d="M419.2 286.6 L601.6 278.2 L601.6 462 L421.4 435.6 Z" fill="url(#scr)"/>
<path d="M419.2 286.6 L423 286.4 L424.8 436.1 L421.4 435.6 Z" fill="#4a4a4a"/>
</g></svg>
<svg style="left:40px;top:659px;" width="6" height="18" viewBox="0 0 6 18"><defs><pattern id="dp3" width="3" height="3" patternUnits="userSpaceOnUse"><rect width="1" height="1" fill="#a8a8a8"/></pattern></defs><rect width="6" height="18" fill="url(#dp3)"/></svg>
<svg style="left:40px;top:688px;" width="6" height="21" viewBox="0 0 6 21"><defs><pattern id="dp4" width="3" height="3" patternUnits="userSpaceOnUse"><rect width="1" height="1" fill="#a8a8a8"/></pattern></defs><rect width="6" height="21" fill="url(#dp4)"/></svg>
<div style="left:50px;top:672px;width:1043px;height:1px;background:#8e8e8e;"></div>
<svg style="left:50px;top:672px;" width="1045" height="8" viewBox="0 0 1045 8"><path d="M4.5 2.4 V6.4 M16.5 2.6 V4.6 M27.5 2.6 V4.6 M39.5 2.6 V4.6 M50.5 2.6 V4.6 M62.5 2.4 V6.4 M73.5 2.6 V4.6 M85.5 2.6 V4.6 M96.5 2.6 V4.6 M108.5 2.6 V4.6 M119.5 2.4 V6.4 M131.5 2.6 V4.6 M142.5 2.6 V4.6 M154.5 2.6 V4.6 M165.5 2.6 V4.6 M177.5 2.4 V6.4 M188.5 2.6 V4.6 M199.5 2.6 V4.6 M211.5 2.6 V4.6 M222.5 2.6 V4.6 M234.5 2.4 V6.4 M245.5 2.6 V4.6 M257.5 2.6 V4.6 M268.5 2.6 V4.6 M280.5 2.6 V4.6 M291.5 2.4 V6.4 M303.5 2.6 V4.6 M314.5 2.6 V4.6 M326.5 2.6 V4.6 M337.5 2.6 V4.6 M349.5 2.4 V6.4 M360.5 2.6 V4.6 M372.5 2.6 V4.6 M383.5 2.6 V4.6 M395.5 2.6 V4.6 M406.5 2.4 V6.4 M417.5 2.6 V4.6 M429.5 2.6 V4.6 M440.5 2.6 V4.6 M452.5 2.6 V4.6 M463.5 2.4 V6.4 M475.5 2.6 V4.6 M486.5 2.6 V4.6 M498.5 2.6 V4.6 M509.5 2.6 V4.6 M521.5 2.4 V6.4 M532.5 2.6 V4.6 M544.5 2.6 V4.6 M555.5 2.6 V4.6 M567.5 2.6 V4.6 M578.5 2.4 V6.4 M590.5 2.6 V4.6 M601.5 2.6 V4.6 M613.5 2.6 V4.6 M624.5 2.6 V4.6 M635.5 2.4 V6.4 M647.5 2.6 V4.6 M658.5 2.6 V4.6 M670.5 2.6 V4.6 M681.5 2.6 V4.6 M693.5 2.4 V6.4 M704.5 2.6 V4.6 M716.5 2.6 V4.6 M727.5 2.6 V4.6 M739.5 2.6 V4.6 M750.5 2.4 V6.4 M762.5 2.6 V4.6 M773.5 2.6 V4.6 M785.5 2.6 V4.6 M796.5 2.6 V4.6 M808.5 2.4 V6.4 M819.5 2.6 V4.6 M831.5 2.6 V4.6 M842.5 2.6 V4.6 M853.5 2.6 V4.6 M865.5 2.4 V6.4 M876.5 2.6 V4.6 M888.5 2.6 V4.6 M899.5 2.6 V4.6 M911.5 2.6 V4.6 M922.5 2.4 V6.4 M934.5 2.6 V4.6 M945.5 2.6 V4.6 M957.5 2.6 V4.6 M968.5 2.6 V4.6 M980.5 2.4 V6.4 M991.5 2.6 V4.6 M1003.5 2.6 V4.6 M1014.5 2.6 V4.6 M1026.5 2.6 V4.6 M1037.5 2.4 V6.4 " stroke="#cfcfcf" stroke-width="1" fill="none"/></svg>
<div style="left:399px;top:657px;width:1px;height:21px;background:#bdbdad;"></div>
<div style="left:743px;top:657px;width:1px;height:21px;background:#bdbdad;"></div>
<div style="left:1087px;top:657px;width:1px;height:21px;background:#bdbdad;"></div>
<div style="left:50px;top:656px;width:9px;height:16px;background:#7b9fdb;"></div>
<span style="left:60px;top:655.5px;line-height:16px;font-size:11px;color:#cfcfcf;letter-spacing:-0.275px;">0</span>
<span style="left:109.2px;top:655.5px;line-height:16px;font-size:11px;color:#cfcfcf;letter-spacing:-0.275px;">5</span>
<span style="left:163.5px;top:655.5px;line-height:16px;font-size:11px;color:#cfcfcf;letter-spacing:-0.275px;">10</span>
<span style="left:220.9px;top:655.5px;line-height:16px;font-size:11px;color:#cfcfcf;letter-spacing:-0.275px;">15</span>
<span style="left:278.3px;top:655.5px;line-height:16px;font-size:11px;color:#cfcfcf;letter-spacing:-0.275px;">20</span>
<span style="left:335.6px;top:655.5px;line-height:16px;font-size:11px;color:#cfcfcf;letter-spacing:-0.275px;">25</span>
<span style="left:393.0px;top:655.5px;line-height:16px;font-size:11px;color:#cfcfcf;letter-spacing:-0.275px;">30</span>
<span style="left:450.4px;top:655.5px;line-height:16px;font-size:11px;color:#cfcfcf;letter-spacing:-0.275px;">35</span>
<span style="left:507.7px;top:655.5px;line-height:16px;font-size:11px;color:#cfcfcf;letter-spacing:-0.275px;">40</span>
<span style="left:565.1px;top:655.5px;line-height:16px;font-size:11px;color:#cfcfcf;letter-spacing:-0.275px;">45</span>
<span style="left:622.5px;top:655.5px;line-height:16px;font-size:11px;color:#cfcfcf;letter-spacing:-0.275px;">50</span>
<span style="left:679.9px;top:655.5px;line-height:16px;font-size:11px;color:#cfcfcf;letter-spacing:-0.275px;">55</span>
<span style="left:737.2px;top:655.5px;line-height:16px;font-size:11px;color:#cfcfcf;letter-spacing:-0.275px;">60</span>
<span style="left:794.6px;top:655.5px;line-height:16px;font-size:11px;color:#cfcfcf;letter-spacing:-0.275px;">65</span>
<span style="left:852.0px;top:655.5px;line-height:16px;font-size:11px;color:#cfcfcf;letter-spacing:-0.275px;">70</span>
<span style="left:909.3px;top:655.5px;line-height:16px;font-size:11px;color:#cfcfcf;letter-spacing:-0.275px;">75</span>
<span style="left:966.7px;top:655.5px;line-height:16px;font-size:11px;color:#cfcfcf;letter-spacing:-0.275px;">80</span>
<span style="left:1024.1px;top:655.5px;line-height:16px;font-size:11px;color:#cfcfcf;letter-spacing:-0.275px;">85</span>
<span style="left:1081.4px;top:655.5px;line-height:16px;font-size:11px;color:#cfcfcf;letter-spacing:-0.275px;">90</span>
<div style="left:1101px;top:659px;width:64.5px;height:15.5px;background:#2b2b2b;border-radius:3px;box-shadow:0 0 0 1px #474747;"></div>
<span style="left:1105px;top:659.5px;line-height:16px;font-size:11px;color:#d6d6d6;letter-spacing:-0.238px;">0 F</span>
<svg style="left:1156.5px;top:659px;" width="10" height="16" viewBox="0 0 10 16"><path d="M2 6 L5 3 L8 6 M2 10 L5 13 L8 10" fill="none" stroke="#808080" stroke-width="1"/></svg>
<div style="left:49px;top:688px;width:65px;height:15px;background:#2b2b2b;border-radius:3px;box-shadow:0 0 0 1px #474747;"></div>
<span style="left:53px;top:687.8px;line-height:16px;font-size:11px;color:#d6d6d6;letter-spacing:-0.238px;">0 F</span>
<svg style="left:104px;top:687.5px;" width="10" height="16" viewBox="0 0 10 16"><path d="M2 6 L5 3 L8 6 M2 10 L5 13 L8 10" fill="none" stroke="#808080" stroke-width="1"/></svg>
<div style="left:122px;top:687px;width:433px;height:16.5px;background:#5a5a5a;border-radius:2px;"></div>
<div style="left:127px;top:690px;width:1px;height:11px;background:#7a7a7a;"></div>
<div style="left:130px;top:690px;width:1px;height:11px;background:#7a7a7a;"></div>
<div style="left:545px;top:690px;width:1px;height:11px;background:#7a7a7a;"></div>
<div style="left:548px;top:690px;width:1px;height:11px;background:#7a7a7a;"></div>
<span style="left:137px;top:687.5px;line-height:16px;font-size:11px;color:#cfcfcf;letter-spacing:-0.238px;">0 F</span>
<span style="left:516px;top:687.5px;line-height:16px;font-size:11px;color:#cfcfcf;letter-spacing:-0.248px;">90 F</span>
<div style="left:563px;top:688px;width:65px;height:15px;background:#2b2b2b;border-radius:3px;box-shadow:0 0 0 1px #474747;"></div>
<span style="left:567px;top:687.8px;line-height:16px;font-size:11px;color:#d6d6d6;letter-spacing:-0.248px;">90 F</span>
<svg style="left:618.5px;top:687.5px;" width="10" height="16" viewBox="0 0 10 16"><path d="M2 6 L5 3 L8 6 M2 10 L5 13 L8 10" fill="none" stroke="#808080" stroke-width="1"/></svg>
<div style="left:640px;top:683px;width:26px;height:26px;background:#595959;border-radius:3px;"></div>
<svg style="left:640px;top:683px;" width="26" height="26" viewBox="0 0 26 26"><rect x="7.2" y="7" width="2.8" height="12.4" fill="#181818"/><path d="M19.4 7 V19.4 L10.2 13.2 Z" fill="#181818"/></svg>
<div style="left:678px;top:683px;width:138px;height:26px;background:#595959;border-radius:3px;"></div>
<div style="left:704px;top:683px;width:1px;height:26px;background:#474747;"></div>
<div style="left:732px;top:683px;width:1px;height:26px;background:#474747;"></div>
<div style="left:760px;top:683px;width:1px;height:26px;background:#474747;"></div>
<div style="left:788px;top:683px;width:1px;height:26px;background:#474747;"></div>
<svg style="left:678px;top:683px;" width="138" height="26" viewBox="0 0 138 26">
<rect x="6.8" y="7" width="2.6" height="12.4" fill="#f2f2f2"/><path d="M19.4 7 V19.4 L10 13.2 Z" fill="#181818"/>
<path d="M43 7.4 V19 L34 13.2 Z" fill="#181818"/><rect x="44" y="7" width="2.6" height="12.4" fill="#181818"/>
<path d="M61 5 V21.4 L77.4 13.2 Z" fill="#181818"/>
<rect x="91" y="7" width="2.6" height="12.4" fill="#181818"/><path d="M94.4 7.4 V19 L103.6 13.2 Z" fill="#181818"/>
<path d="M119 7 V19.4 L128.4 13.2 Z" fill="#181818"/><rect x="129" y="7" width="2.6" height="12.4" fill="#f2f2f2"/>
</svg>
<div style="left:828px;top:683px;width:26px;height:26px;background:#595959;border-radius:3px;"></div>
<svg style="left:828px;top:683px;" width="26" height="26" viewBox="0 0 26 26"><path d="M7 7 V19.4 L16.2 13.2 Z" fill="#181818"/><rect x="16.4" y="7" width="3" height="12.4" fill="#181818"/></svg>
<div style="left:866px;top:683px;width:54px;height:26px;background:#595959;border-radius:3px;"></div>
<div style="left:892px;top:683px;width:1px;height:26px;background:#474747;"></div>
<svg style="left:866px;top:683px;" width="54" height="26" viewBox="0 0 54 26">
<circle cx="13" cy="12.8" r="9.4" fill="#ef5c62" stroke="#2a0a0a" stroke-width="1.1"/>
<g transform="rotate(-36 12.6 12.8)"><circle cx="7.6" cy="12.8" r="3.4" fill="#2a0a0a"/><rect x="7.6" y="11.2" width="11" height="3.2" fill="#2a0a0a"/><rect x="14.2" y="9.4" width="1.9" height="3" fill="#2a0a0a"/><rect x="16.9" y="9" width="1.9" height="3.4" fill="#2a0a0a"/><circle cx="6.6" cy="12.8" r="0.9" fill="#ef5c62"/></g>
<circle cx="41" cy="12.8" r="9.4" fill="#ef5c62" stroke="#2a0a0a" stroke-width="1.1"/>
<g fill="none" stroke="#2a0a0a" stroke-width="2.2"><path d="M38.6 18.2 A6 6 0 0 1 38.6 7.4"/><path d="M43.4 7.4 A6 6 0 0 1 43.4 18.2"/></g>
</svg>
<div style="left:932px;top:683px;width:26px;height:26px;background:#595959;border-radius:3px;"></div>
<svg style="left:932px;top:683px;" width="26" height="26" viewBox="0 0 26 26"><circle cx="12.8" cy="12.8" r="9.4" fill="#f0922b" stroke="#2a1a05" stroke-width="1.1"/><g transform="translate(12.8,12.8)"><g fill="#1a1208"><rect x="-1.4" y="-5.6" width="2.8" height="11.2" rx="0.5" transform="rotate(0)"/><rect x="-1.4" y="-5.6" width="2.8" height="11.2" rx="0.5" transform="rotate(45)"/><rect x="-1.4" y="-5.6" width="2.8" height="11.2" rx="0.5" transform="rotate(90)"/><rect x="-1.4" y="-5.6" width="2.8" height="11.2" rx="0.5" transform="rotate(135)"/><circle r="4.1"/></g><circle r="1.9" fill="#f0922b"/></g></svg>
<div style="left:962px;top:683px;width:110px;height:26px;background:#8ba9dd;border-radius:3px 0 0 3px;"></div>
<div style="left:988px;top:683px;width:1px;height:26px;background:rgba(50,60,90,0.45);"></div>
<div style="left:1016px;top:683px;width:1px;height:26px;background:rgba(50,60,90,0.45);"></div>
<div style="left:1044px;top:683px;width:1px;height:26px;background:rgba(50,60,90,0.45);"></div>
<div style="left:1072px;top:683px;width:27.5px;height:26px;background:#595959;border-radius:0 3px 3px 0;"></div>
<svg style="left:962px;top:683px;" width="110" height="26" viewBox="0 0 110 26">
<g transform="translate(1.3,0.9) scale(0.71)"><g transform="translate(0.3,0.5)"><path d="M17 4.4 L21.4 9.8 L18.8 9.8 L18.8 15.2 L24.2 15.2 L24.2 12.6 L29.6 17 L24.2 21.4 L24.2 18.8 L18.8 18.8 L18.8 24.2 L21.4 24.2 L17 29.6 L12.6 24.2 L15.2 24.2 L15.2 18.8 L9.8 18.8 L9.8 21.4 L4.4 17 L9.8 12.6 L9.8 15.2 L15.2 15.2 L15.2 9.8 L12.6 9.8 Z" fill="#f9a63a" stroke="#3b2508" stroke-width="1.3" stroke-linejoin="round"/></g></g>
<rect x="33.6" y="5.6" width="15" height="15" rx="1.6" fill="#f9a63a" stroke="#3b2508" stroke-width="1.1"/><path d="M33.6 13.2 H41 V20.6 M41 13.2 L47.8 6.4" fill="none" stroke="#8a4d0c" stroke-width="1.2"/>
<path d="M71.31 6.36 A7 7 0 0 0 64.30 18.26" fill="none" stroke="#3b2508" stroke-width="3.7"/><path d="M67.06 20.58 L61.85 20.25 L65.83 15.50 Z" fill="#f9a63a" stroke="#3b2508" stroke-width="0.80" stroke-linejoin="round"/><path d="M70.73 6.17 A7 7 0 0 0 64.30 18.26" fill="none" stroke="#f9a63a" stroke-width="2.5"/><path d="M66.29 19.44 A7 7 0 0 0 73.30 7.54" fill="none" stroke="#3b2508" stroke-width="3.7"/><path d="M70.54 5.22 L75.75 5.55 L71.77 10.30 Z" fill="#f9a63a" stroke="#3b2508" stroke-width="0.80" stroke-linejoin="round"/><path d="M66.87 19.63 A7 7 0 0 0 73.30 7.54" fill="none" stroke="#f9a63a" stroke-width="2.5"/>
<circle cx="96.4" cy="12.8" r="10.4" fill="none" stroke="#3b2508" stroke-width="2.4"/><circle cx="96.4" cy="12.8" r="10.4" fill="none" stroke="#ee8f2c" stroke-width="1.3"/>
<circle cx="96.4" cy="12.8" r="8.2" fill="none" stroke="#3b2508" stroke-width="1.9"/><circle cx="96.4" cy="12.8" r="8.2" fill="none" stroke="#ee8f2c" stroke-width="0.9"/>
<text x="96.9" y="18.2" text-anchor="middle" font-family="Liberation Sans" font-weight="bold" font-size="15" fill="#12141c" stroke="#12141c" stroke-width="0.5">P</text>
</svg>
<svg style="left:1072px;top:683px;" width="28" height="26" viewBox="0 0 28 26"><circle cx="8" cy="6" r="2.6" fill="#f0922b"/><circle cx="8" cy="13" r="2.6" fill="#f0922b"/><circle cx="8" cy="20" r="2.6" fill="#181818"/><circle cx="15" cy="6" r="2.6" fill="#f0922b"/><circle cx="15" cy="13" r="2.6" fill="#f0922b"/><circle cx="15" cy="20" r="2.6" fill="#181818"/><circle cx="22.59999999999991" cy="6" r="2.6" fill="#181818"/><circle cx="22.59999999999991" cy="13" r="2.6" fill="#181818"/><circle cx="22.59999999999991" cy="20" r="2.6" fill="#181818"/></svg>
<div style="left:1112px;top:683px;width:54px;height:26px;background:#8ba9dd;border-radius:3px;"></div>
<div style="left:1138px;top:683px;width:1px;height:26px;background:rgba(50,60,90,0.45);"></div>
<svg style="left:1112px;top:683px;" width="54" height="26" viewBox="0 0 54 26">
<g transform="rotate(-32 11 15)"><path d="M4.4 11.6 H9 L15 6.4 V23.6 L9 18.4 H4.4 Z" fill="#151a24"/></g>
<g fill="none" stroke="#151a24" stroke-width="1.7" stroke-linecap="round"><path d="M14.6 9.6 A4 4 0 0 1 18.6 13.6"/><path d="M14.4 6.2 A7.4 7.4 0 0 1 21.8 13.6"/><path d="M14.2 2.8 A10.8 10.8 0 0 1 25 13.6"/></g>
<rect x="33.6" y="3" width="13.6" height="21" fill="#2a1a05"/>
<rect x="36.4" y="3.6" width="8" height="5.6" fill="#f0a23a"/><rect x="36.4" y="10.6" width="8" height="5.8" fill="#f0a23a"/><rect x="36.4" y="17.8" width="8" height="5.6" fill="#f0a23a"/>
<g fill="#f0a23a"><rect x="34.2" y="4" width="1.4" height="1.6"/><rect x="34.2" y="7.4" width="1.4" height="1.6"/><rect x="34.2" y="10.8" width="1.4" height="1.6"/><rect x="34.2" y="14.2" width="1.4" height="1.6"/><rect x="34.2" y="17.6" width="1.4" height="1.6"/><rect x="34.2" y="21" width="1.4" height="1.6"/>
<rect x="45.2" y="4" width="1.4" height="1.6"/><rect x="45.2" y="7.4" width="1.4" height="1.6"/><rect x="45.2" y="10.8" width="1.4" height="1.6"/><rect x="45.2" y="14.2" width="1.4" height="1.6"/><rect x="45.2" y="17.6" width="1.4" height="1.6"/><rect x="45.2" y="21" width="1.4" height="1.6"/></g>
<path d="M54 21 V26 H49 Z" fill="#151a24"/>
</svg>
<div style="left:39px;top:713.5px;width:826px;height:119px;background:#3d3d3d;box-sizing:border-box;border:1px solid #505050;"></div>
<div style="left:40px;top:736px;width:825px;height:1px;background:#4a4a4a;"></div>
<div style="left:46px;top:720px;width:14px;height:2px;background:#a9a9a9;"></div>
<div style="left:46px;top:724px;width:14px;height:2px;background:#a9a9a9;"></div>
<div style="left:46px;top:728px;width:14px;height:2px;background:#a9a9a9;"></div>
<span style="left:70px;top:717.0px;line-height:16px;font-size:11px;color:#d2d2d2;letter-spacing:-0.248px;">Create</span>
<span style="left:116px;top:717.0px;line-height:16px;font-size:11px;color:#d2d2d2;letter-spacing:-0.213px;">Edit</span>
<span style="left:149px;top:717.0px;line-height:16px;font-size:11px;color:#d2d2d2;letter-spacing:-0.266px;">View</span>
<span style="left:187px;top:717.0px;line-height:16px;font-size:11px;color:#d2d2d2;letter-spacing:-0.229px;">Select</span>
<span style="left:230px;top:717.0px;line-height:16px;font-size:11px;color:#d2d2d2;letter-spacing:-0.220px;">Material</span>
<span style="left:284px;top:717.0px;line-height:16px;font-size:11px;color:#d2d2d2;letter-spacing:-0.232px;">Texture</span>
<div style="left:42px;top:740px;width:43px;height:59px;background:#505050;"></div>
<svg style="left:43px;top:741px;" width="41" height="43" viewBox="0 0 41 43"><defs><radialGradient id="m1" cx="36%" cy="30%" r="75%"><stop offset="0" stop-color="#6a6a6a"/><stop offset="0.45" stop-color="#363636"/><stop offset="1" stop-color="#161616"/></radialGradient>
<pattern id="m1p" width="10" height="10" patternUnits="userSpaceOnUse"><rect width="10" height="10" fill="#69737f"/><rect width="5" height="5" fill="#79838f"/><rect x="5" y="5" width="5" height="5" fill="#79838f"/></pattern>
<linearGradient id="m1f" x1="0" y1="0" x2="0" y2="1"><stop offset="0" stop-color="#5e6873"/><stop offset="1" stop-color="#848f9b"/></linearGradient></defs>
<rect width="41" height="43" fill="url(#m1p)"/>
<rect y="26.66" width="41" height="16.34" fill="url(#m1f)"/>
<ellipse cx="20.5" cy="39.99" rx="14.76" ry="2.58" fill="#30353c" opacity="0.7"/>
<circle cx="20.5" cy="21.07" r="19.27" fill="url(#m1)"/><defs><pattern id="m1s" width="2.6" height="2.6" patternUnits="userSpaceOnUse" patternTransform="rotate(-32)"><rect width="2.6" height="1.1" fill="#0c0c0c"/></pattern><clipPath id="m1c"><circle cx="20.5" cy="21.07" r="19.27"/></clipPath></defs><rect width="41" height="43" fill="url(#m1s)" opacity="0.32" clip-path="url(#m1c)"/></svg>
<div style="left:43px;top:784px;width:41px;height:14px;background:#7b9fdb;"></div>
<span style="left:43.6px;top:783.8px;line-height:16px;font-size:11px;color:#0d1a3a;letter-spacing:0.055px;">Mat</span>
<div style="left:90px;top:740px;width:45px;height:59px;background:#505050;"></div>
<svg style="left:91px;top:741px;" width="43" height="43" viewBox="0 0 43 43"><defs><radialGradient id="m2" cx="36%" cy="30%" r="75%"><stop offset="0" stop-color="#7a7a7a"/><stop offset="0.45" stop-color="#4a4a4a"/><stop offset="1" stop-color="#1e1e1e"/></radialGradient>
<pattern id="m2p" width="10" height="10" patternUnits="userSpaceOnUse"><rect width="10" height="10" fill="#69737f"/><rect width="5" height="5" fill="#79838f"/><rect x="5" y="5" width="5" height="5" fill="#79838f"/></pattern>
<linearGradient id="m2f" x1="0" y1="0" x2="0" y2="1"><stop offset="0" stop-color="#5e6873"/><stop offset="1" stop-color="#848f9b"/></linearGradient></defs>
<rect width="43" height="43" fill="url(#m2p)"/>
<rect y="26.66" width="43" height="16.34" fill="url(#m2f)"/>
<ellipse cx="21.5" cy="39.99" rx="15.479999999999999" ry="2.58" fill="#30353c" opacity="0.7"/>
<circle cx="21.5" cy="21.07" r="20.209999999999997" fill="url(#m2)"/></svg>
<div style="left:90.5px;top:740.5px;width:44px;height:44px;background:transparent;box-sizing:border-box;border:1.4px solid #f0a040;"></div>
<div style="left:92.5px;top:783.6px;width:40.4px;height:16px;overflow:hidden;"><span style="left:0;top:0;line-height:16px;font-size:11px;transform-origin:0 50%;transform:scaleX(0.8180);color:#d4d4d4;">DARK GREY</span></div>
<div style="left:139.5px;top:740px;width:44.5px;height:59px;background:#505050;"></div>
<svg style="left:140.5px;top:741px;" width="43" height="43" viewBox="0 0 43 43"><defs><radialGradient id="m3" cx="36%" cy="30%" r="75%"><stop offset="0" stop-color="#d6d6d6"/><stop offset="0.45" stop-color="#9a9a9a"/><stop offset="1" stop-color="#4c4c4c"/></radialGradient>
<pattern id="m3p" width="10" height="10" patternUnits="userSpaceOnUse"><rect width="10" height="10" fill="#69737f"/><rect width="5" height="5" fill="#79838f"/><rect x="5" y="5" width="5" height="5" fill="#79838f"/></pattern>
<linearGradient id="m3f" x1="0" y1="0" x2="0" y2="1"><stop offset="0" stop-color="#5e6873"/><stop offset="1" stop-color="#848f9b"/></linearGradient></defs>
<rect width="43" height="43" fill="url(#m3p)"/>
<rect y="26.66" width="43" height="16.34" fill="url(#m3f)"/>
<ellipse cx="21.5" cy="39.99" rx="15.479999999999999" ry="2.58" fill="#30353c" opacity="0.7"/>
<circle cx="21.5" cy="21.07" r="20.209999999999997" fill="url(#m3)"/></svg>
<div style="left:140px;top:740.5px;width:44px;height:44px;background:transparent;box-sizing:border-box;border:1.4px solid #f0a040;"></div>
<span style="left:141.4px;top:783.6px;line-height:16px;font-size:11px;color:#d4d4d4;transform-origin:0 50%;transform:scaleX(0.8180);">GREY</span>
<div style="left:868px;top:713.5px;width:299px;height:119px;background:#3d3d3d;box-sizing:border-box;border:1px solid #505050;"></div>
<div style="left:869px;top:736px;width:298px;height:1px;background:#4a4a4a;"></div>
<div style="left:874px;top:721px;width:14px;height:2px;background:#a9a9a9;"></div>
<div style="left:874px;top:725px;width:14px;height:2px;background:#a9a9a9;"></div>
<div style="left:874px;top:729px;width:14px;height:2px;background:#a9a9a9;"></div>
<span style="left:896px;top:718.0px;line-height:16px;font-size:11px;color:#d2d2d2;letter-spacing:-0.220px;">Position</span>
<span style="left:987.5px;top:718.0px;line-height:16px;font-size:11px;color:#d2d2d2;letter-spacing:-0.241px;">Size</span>
<span style="left:1078px;top:718.0px;line-height:16px;font-size:11px;color:#d2d2d2;letter-spacing:-0.230px;">Rotation</span>
<span style="left:872.5px;top:746.0px;line-height:16px;font-size:11px;color:#d2d2d2;letter-spacing:-0.330px;">X</span>
<span style="left:970px;top:746.0px;line-height:16px;font-size:11px;color:#d2d2d2;letter-spacing:-0.330px;">X</span>
<span style="left:1067.5px;top:746.0px;line-height:16px;font-size:11px;color:#d2d2d2;letter-spacing:-0.357px;">H</span>
<div style="left:883.5px;top:745.6px;width:82.5px;height:17px;background:#2b2b2b;border-radius:3px;box-shadow:0 0 0 1px #474747;"></div>
<span style="left:888px;top:746.0px;line-height:16px;font-size:11px;color:#d6d6d6;letter-spacing:-0.268px;">0 cm</span>
<svg style="left:957px;top:746px;" width="10" height="16" viewBox="0 0 10 16"><path d="M2 6 L5 3 L8 6 M2 10 L5 13 L8 10" fill="none" stroke="#808080" stroke-width="1"/></svg>
<div style="left:981.5px;top:745.6px;width:83.5px;height:17px;background:#2b2b2b;border-radius:3px;box-shadow:0 0 0 1px #474747;"></div>
<span style="left:986px;top:746.0px;line-height:16px;font-size:11px;color:#d6d6d6;letter-spacing:-0.268px;">0 cm</span>
<svg style="left:1056px;top:746px;" width="10" height="16" viewBox="0 0 10 16"><path d="M2 6 L5 3 L8 6 M2 10 L5 13 L8 10" fill="none" stroke="#808080" stroke-width="1"/></svg>
<div style="left:1080.5px;top:745.6px;width:81.5px;height:17px;background:#2b2b2b;border-radius:3px;box-shadow:0 0 0 1px #474747;"></div>
<span style="left:1085px;top:746.0px;line-height:16px;font-size:11px;color:#d6d6d6;letter-spacing:-0.204px;">0 °</span>
<svg style="left:1153px;top:746px;" width="10" height="16" viewBox="0 0 10 16"><path d="M2 6 L5 3 L8 6 M2 10 L5 13 L8 10" fill="none" stroke="#808080" stroke-width="1"/></svg>
<span style="left:872.5px;top:768.0px;line-height:16px;font-size:11px;color:#d2d2d2;letter-spacing:-0.330px;">Y</span>
<span style="left:970px;top:768.0px;line-height:16px;font-size:11px;color:#d2d2d2;letter-spacing:-0.330px;">Y</span>
<span style="left:1067.5px;top:768.0px;line-height:16px;font-size:11px;color:#d2d2d2;letter-spacing:-0.330px;">P</span>
<div style="left:883.5px;top:767.6px;width:82.5px;height:17px;background:#2b2b2b;border-radius:3px;box-shadow:0 0 0 1px #474747;"></div>
<span style="left:888px;top:768.0px;line-height:16px;font-size:11px;color:#d6d6d6;letter-spacing:-0.268px;">0 cm</span>
<svg style="left:957px;top:768px;" width="10" height="16" viewBox="0 0 10 16"><path d="M2 6 L5 3 L8 6 M2 10 L5 13 L8 10" fill="none" stroke="#808080" stroke-width="1"/></svg>
<div style="left:981.5px;top:767.6px;width:83.5px;height:17px;background:#2b2b2b;border-radius:3px;box-shadow:0 0 0 1px #474747;"></div>
<span style="left:986px;top:768.0px;line-height:16px;font-size:11px;color:#d6d6d6;letter-spacing:-0.268px;">0 cm</span>
<svg style="left:1056px;top:768px;" width="10" height="16" viewBox="0 0 10 16"><path d="M2 6 L5 3 L8 6 M2 10 L5 13 L8 10" fill="none" stroke="#808080" stroke-width="1"/></svg>
<div style="left:1080.5px;top:767.6px;width:81.5px;height:17px;background:#2b2b2b;border-radius:3px;box-shadow:0 0 0 1px #474747;"></div>
<span style="left:1085px;top:768.0px;line-height:16px;font-size:11px;color:#d6d6d6;letter-spacing:-0.204px;">0 °</span>
<svg style="left:1153px;top:768px;" width="10" height="16" viewBox="0 0 10 16"><path d="M2 6 L5 3 L8 6 M2 10 L5 13 L8 10" fill="none" stroke="#808080" stroke-width="1"/></svg>
<span style="left:872.5px;top:790.0px;line-height:16px;font-size:11px;color:#d2d2d2;letter-spacing:-0.302px;">Z</span>
<span style="left:970px;top:790.0px;line-height:16px;font-size:11px;color:#d2d2d2;letter-spacing:-0.302px;">Z</span>
<span style="left:1067.5px;top:790.0px;line-height:16px;font-size:11px;color:#d2d2d2;letter-spacing:-0.330px;">B</span>
<div style="left:883.5px;top:789.6px;width:82.5px;height:17px;background:#2b2b2b;border-radius:3px;box-shadow:0 0 0 1px #474747;"></div>
<span style="left:888px;top:790.0px;line-height:16px;font-size:11px;color:#d6d6d6;letter-spacing:-0.268px;">0 cm</span>
<svg style="left:957px;top:790px;" width="10" height="16" viewBox="0 0 10 16"><path d="M2 6 L5 3 L8 6 M2 10 L5 13 L8 10" fill="none" stroke="#808080" stroke-width="1"/></svg>
<div style="left:981.5px;top:789.6px;width:83.5px;height:17px;background:#2b2b2b;border-radius:3px;box-shadow:0 0 0 1px #474747;"></div>
<span style="left:986px;top:790.0px;line-height:16px;font-size:11px;color:#d6d6d6;letter-spacing:-0.268px;">0 cm</span>
<svg style="left:1056px;top:790px;" width="10" height="16" viewBox="0 0 10 16"><path d="M2 6 L5 3 L8 6 M2 10 L5 13 L8 10" fill="none" stroke="#808080" stroke-width="1"/></svg>
<div style="left:1080.5px;top:789.6px;width:81.5px;height:17px;background:#2b2b2b;border-radius:3px;box-shadow:0 0 0 1px #474747;"></div>
<span style="left:1085px;top:790.0px;line-height:16px;font-size:11px;color:#d6d6d6;letter-spacing:-0.204px;">0 °</span>
<svg style="left:1153px;top:790px;" width="10" height="16" viewBox="0 0 10 16"><path d="M2 6 L5 3 L8 6 M2 10 L5 13 L8 10" fill="none" stroke="#808080" stroke-width="1"/></svg>
<div style="left:883px;top:813px;width:83px;height:17px;background:#575757;border-radius:3px;"></div>
<span style="left:890px;top:813.8px;line-height:16px;font-size:11px;color:#dcdcdc;letter-spacing:-0.220px;">Object (Rel)</span>
<svg style="left:952px;top:816.6px;" width="12" height="10" viewBox="0 0 12 10"><path d="M3.0 3.5 L6 6.5 L9.0 3.5" fill="none" stroke="#d0d0d0" stroke-width="1.3"/></svg>
<div style="left:981px;top:813px;width:83px;height:17px;background:#484848;border-radius:3px;"></div>
<span style="left:988px;top:813.8px;line-height:16px;font-size:11px;color:#777;letter-spacing:-0.241px;">Size</span>
<svg style="left:1050px;top:816.6px;" width="12" height="10" viewBox="0 0 12 10"><path d="M3.0 3.5 L6 6.5 L9.0 3.5" fill="none" stroke="#6a6a6a" stroke-width="1.3"/></svg>
<div style="left:1080px;top:813px;width:82px;height:17px;background:#575757;border-radius:3px;"></div>
<span style="left:1107px;top:813.8px;line-height:16px;font-size:11px;color:#dcdcdc;letter-spacing:-0.248px;">Apply</span>
<div style="left:0px;top:836px;width:1168px;height:1px;background:#4a4a4a;"></div>
<div style="left:4.5px;top:843px;width:14px;height:2px;background:#a9a9a9;"></div>
<div style="left:4.5px;top:847px;width:14px;height:2px;background:#a9a9a9;"></div>
<div style="left:4.5px;top:851px;width:14px;height:2px;background:#a9a9a9;"></div>
<span style="left:30px;top:841.0px;line-height:16px;font-size:11px;color:#c4c4c4;letter-spacing:-0.241px;">00:00:00</span>
<div style="left:81.5px;top:840px;width:1px;height:19px;background:#525252;"></div>
<span style="left:87px;top:841.0px;line-height:16px;font-size:11px;color:#c6c6c6;letter-spacing:-0.098px;">Live Selection: Click and drag to select elements. Hold down SHIFT to add to the selection, CTRL to remove.</span>
<div style="left:1170px;top:49.5px;width:408px;height:368px;background:#3d3d3d;box-sizing:border-box;border:1px solid #505050;"></div>
<div style="left:1177px;top:56.8px;width:14px;height:2px;background:#b4b4b4;"></div>
<div style="left:1177px;top:60.8px;width:14px;height:2px;background:#b4b4b4;"></div>
<div style="left:1177px;top:64.8px;width:14px;height:2px;background:#b4b4b4;"></div>
<span style="left:1201.4px;top:54.0px;line-height:16px;font-size:11px;color:#d2d2d2;letter-spacing:-0.199px;">File</span>
<span style="left:1232.4px;top:54.0px;line-height:16px;font-size:11px;color:#d2d2d2;letter-spacing:-0.213px;">Edit</span>
<span style="left:1265.4px;top:54.0px;line-height:16px;font-size:11px;color:#d2d2d2;letter-spacing:-0.266px;">View</span>
<span style="left:1303px;top:54.0px;line-height:16px;font-size:11px;color:#d2d2d2;letter-spacing:-0.238px;">Object</span>
<span style="left:1349px;top:54.0px;line-height:16px;font-size:11px;color:#d9d98c;letter-spacing:-0.261px;">Tags</span>
<span style="left:1385.5px;top:54.0px;line-height:16px;font-size:11px;color:#d2d2d2;letter-spacing:-0.275px;">Bookmarks</span>
<svg style="left:1500px;top:54px;" width="16" height="16" viewBox="0 0 16 16"><circle cx="6" cy="5.6" r="3.8" fill="none" stroke="#8f8f8f" stroke-width="1.3"/><path d="M8.6 8.6 L13 14" stroke="#8f8f8f" stroke-width="2.2" stroke-linecap="round"/></svg>
<svg style="left:1518px;top:54px;" width="17" height="16" viewBox="0 0 17 16"><path d="M8.5 1.6 L15.6 8.6 H12.6 V14.6 H4.4 V8.6 H1.4 Z" fill="none" stroke="#8f8f8f" stroke-width="1.3" stroke-linejoin="round"/></svg>
<svg style="left:1538px;top:54px;" width="16" height="16" viewBox="0 0 16 16"><path d="M1.4 1.6 H14.2 L9.4 7.8 V14.2 L6.2 12.6 V7.8 Z" fill="none" stroke="#8f8f8f" stroke-width="1.3" stroke-linejoin="round"/><path d="M1.4 1.6 H14.2" stroke="#8f8f8f" stroke-width="2"/></svg>
<svg style="left:1559px;top:54px;" width="15" height="16" viewBox="0 0 15 16"><rect x="1.2" y="1.2" width="12" height="13.6" fill="none" stroke="#8f8f8f" stroke-width="1.2"/><path d="M7.2 4.6 V11.4 M3.8 8 H10.6" stroke="#8f8f8f" stroke-width="1.8"/></svg>
<div style="left:1171px;top:73.5px;width:403.5px;height:1px;background:#4a4a4a;"></div>
<div style="left:1171.5px;top:75px;width:403px;height:21px;background:#4b4b4b;"></div>
<div style="left:1171.5px;top:96px;width:403px;height:20px;background:#3a3a3a;"></div>
<div style="left:1171.5px;top:116px;width:403px;height:20px;background:#484848;"></div>
<div style="left:1260px;top:75px;width:1px;height:342px;background:#4e4e4e;"></div>
<div style="left:1300px;top:75px;width:1px;height:342px;background:#4e4e4e;"></div>
<div style="left:1574.5px;top:75px;width:3px;height:342px;background:#474747;"></div>
<svg style="left:1172px;top:74px;" width="40" height="64" viewBox="0 0 40 64"><g fill="none" stroke="#9a9a9a" stroke-width="1">
<path d="M7.5 2 V8.5 M3.5 8.5 H11.5 V16.5 H3.5 Z M5.5 12.5 H9.5 M11.5 12.5 H16"/>
<path d="M18.5 22 V52.5 H26.5 M18.5 32.5 H26.5"/></g></svg>
<svg style="left:1187.6px;top:79.6px;" width="16" height="14" viewBox="0 0 16 14"><path d="M8 2 L13.8 12 H2.2 Z" fill="#86c4f4" stroke="#1a2f48" stroke-width="1" stroke-linejoin="round"/>
<path d="M8 3.4 L11.6 9.6 H4.4 Z" fill="#a6d8ff"/>
<circle cx="8" cy="1.8" r="1.4" fill="#fff"/><circle cx="2" cy="12.2" r="1.4" fill="#fff"/><circle cx="14" cy="12.2" r="1.4" fill="#fff"/></svg>
<svg style="left:1198.6px;top:99.8px;" width="16" height="14" viewBox="0 0 16 14"><path d="M8 2 L13.8 12 H2.2 Z" fill="#86c4f4" stroke="#1a2f48" stroke-width="1" stroke-linejoin="round"/>
<path d="M8 3.4 L11.6 9.6 H4.4 Z" fill="#a6d8ff"/>
<circle cx="8" cy="1.8" r="1.4" fill="#fff"/><circle cx="2" cy="12.2" r="1.4" fill="#fff"/><circle cx="14" cy="12.2" r="1.4" fill="#fff"/></svg>
<svg style="left:1198.6px;top:119.8px;" width="16" height="14" viewBox="0 0 16 14"><path d="M8 2 L13.8 12 H2.2 Z" fill="#86c4f4" stroke="#1a2f48" stroke-width="1" stroke-linejoin="round"/>
<path d="M8 3.4 L11.6 9.6 H4.4 Z" fill="#a6d8ff"/>
<circle cx="8" cy="1.8" r="1.4" fill="#fff"/><circle cx="2" cy="12.2" r="1.4" fill="#fff"/><circle cx="14" cy="12.2" r="1.4" fill="#fff"/></svg>
<span style="left:1207.5px;top:79.0px;line-height:16px;font-size:11.5px;color:#efc23c;transform-origin:0 50%;transform:scaleX(0.7684);">CRT</span>
<span style="left:1218.4px;top:99.0px;line-height:16px;font-size:11.5px;color:#d68a3a;letter-spacing:-0.242px;">Display</span>
<span style="left:1218.4px;top:119.0px;line-height:16px;font-size:11.5px;color:#d68a3a;letter-spacing:-0.273px;">Bottom</span>
<svg style="left:1264px;top:79.6px;" width="26" height="13" viewBox="0 0 26 13"><rect x="0.4" y="0.6" width="11.6" height="11.6" rx="2" fill="#8c8c8c"/><path d="M2.8 9.8 L9.6 3" stroke="#3e3e3e" stroke-width="1.2"/>
<circle cx="19.6" cy="3" r="2.5" fill="#7e7e7e"/><circle cx="19.6" cy="9.8" r="2.5" fill="#7e7e7e"/></svg>
<svg style="left:1302px;top:76.5px;" width="17" height="18" viewBox="0 0 17 18"><defs><radialGradient id="od" cx="35%" cy="30%" r="70%"><stop offset="0" stop-color="#f5b060"/><stop offset="1" stop-color="#b0601a"/></radialGradient></defs>
<circle cx="4.6" cy="4.6" r="3" fill="url(#od)"/><circle cx="11" cy="11" r="3.5" fill="url(#od)"/></svg>
<svg style="left:1322.5px;top:78.0px;" width="15" height="15" viewBox="0 0 15 15"><rect x="0.5" y="0.5" width="14" height="14" fill="#111" stroke="#eaa050" stroke-width="1"/><rect x="2.00" y="2.00" width="3.67" height="3.67" fill="#fff"/><rect x="2.00" y="9.34" width="3.67" height="3.67" fill="#fff"/><rect x="5.67" y="5.67" width="3.67" height="3.67" fill="#fff"/><rect x="9.34" y="2.00" width="3.67" height="3.67" fill="#fff"/><rect x="9.34" y="9.34" width="3.67" height="3.67" fill="#fff"/></svg>
<svg style="left:1264px;top:99.6px;" width="26" height="13" viewBox="0 0 26 13"><rect x="0.4" y="0.6" width="11.6" height="11.6" rx="2" fill="#8c8c8c"/><path d="M2.8 9.8 L9.6 3" stroke="#3e3e3e" stroke-width="1.2"/>
<circle cx="19.6" cy="3" r="2.5" fill="#7e7e7e"/><circle cx="19.6" cy="9.8" r="2.5" fill="#7e7e7e"/></svg>
<svg style="left:1302px;top:96.5px;" width="17" height="18" viewBox="0 0 17 18"><defs><radialGradient id="od" cx="35%" cy="30%" r="70%"><stop offset="0" stop-color="#f5b060"/><stop offset="1" stop-color="#b0601a"/></radialGradient></defs>
<circle cx="4.6" cy="4.6" r="3" fill="url(#od)"/><circle cx="11" cy="11" r="3.5" fill="url(#od)"/></svg>
<svg style="left:1322.5px;top:98.0px;" width="15" height="15" viewBox="0 0 15 15"><rect x="0.5" y="0.5" width="14" height="14" fill="#111" stroke="#eaa050" stroke-width="1"/><rect x="2.00" y="2.00" width="3.67" height="3.67" fill="#fff"/><rect x="2.00" y="9.34" width="3.67" height="3.67" fill="#fff"/><rect x="5.67" y="5.67" width="3.67" height="3.67" fill="#fff"/><rect x="9.34" y="2.00" width="3.67" height="3.67" fill="#fff"/><rect x="9.34" y="9.34" width="3.67" height="3.67" fill="#fff"/></svg>
<svg style="left:1264px;top:119.6px;" width="26" height="13" viewBox="0 0 26 13"><rect x="0.4" y="0.6" width="11.6" height="11.6" rx="2" fill="#8c8c8c"/><path d="M2.8 9.8 L9.6 3" stroke="#3e3e3e" stroke-width="1.2"/>
<circle cx="19.6" cy="3" r="2.5" fill="#7e7e7e"/><circle cx="19.6" cy="9.8" r="2.5" fill="#7e7e7e"/></svg>
<svg style="left:1302px;top:116.5px;" width="17" height="18" viewBox="0 0 17 18"><defs><radialGradient id="od" cx="35%" cy="30%" r="70%"><stop offset="0" stop-color="#f5b060"/><stop offset="1" stop-color="#b0601a"/></radialGradient></defs>
<circle cx="4.6" cy="4.6" r="3" fill="url(#od)"/><circle cx="11" cy="11" r="3.5" fill="url(#od)"/></svg>
<svg style="left:1322.5px;top:118.0px;" width="15" height="15" viewBox="0 0 15 15"><rect x="0.5" y="0.5" width="14" height="14" fill="#111" stroke="#eaa050" stroke-width="1"/><rect x="2.00" y="2.00" width="3.67" height="3.67" fill="#fff"/><rect x="2.00" y="9.34" width="3.67" height="3.67" fill="#fff"/><rect x="5.67" y="5.67" width="3.67" height="3.67" fill="#fff"/><rect x="9.34" y="2.00" width="3.67" height="3.67" fill="#fff"/><rect x="9.34" y="9.34" width="3.67" height="3.67" fill="#fff"/></svg>
<svg style="left:1341px;top:76.2px;" width="18" height="18" viewBox="0 0 18 18"><defs><radialGradient id="ts1" cx="38%" cy="30%" r="72%"><stop offset="0" stop-color="#777"/><stop offset="0.5" stop-color="#3e3e3e"/><stop offset="1" stop-color="#191919"/></radialGradient>
<pattern id="ts1p" width="4" height="4" patternUnits="userSpaceOnUse"><rect width="4" height="4" fill="#59626c"/><rect width="2" height="2" fill="#6f7883"/><rect x="2" y="2" width="2" height="2" fill="#6f7883"/></pattern></defs>
<rect width="18" height="18" fill="url(#ts1p)"/><circle cx="9" cy="9" r="8.2" fill="url(#ts1)"/></svg>
<svg style="left:1361px;top:76.2px;" width="18" height="18" viewBox="0 0 18 18"><defs><radialGradient id="ts2" cx="38%" cy="30%" r="72%"><stop offset="0" stop-color="#c9c9c9"/><stop offset="0.5" stop-color="#8a8a8a"/><stop offset="1" stop-color="#404040"/></radialGradient>
<pattern id="ts2p" width="4" height="4" patternUnits="userSpaceOnUse"><rect width="4" height="4" fill="#59626c"/><rect width="2" height="2" fill="#6f7883"/><rect x="2" y="2" width="2" height="2" fill="#6f7883"/></pattern></defs>
<rect width="18" height="18" fill="url(#ts2p)"/><circle cx="9" cy="9" r="8.2" fill="url(#ts2)"/></svg>
<svg style="left:1383px;top:78.6px;" width="15" height="14" viewBox="0 0 15 14"><path d="M7.5 1 L14.4 13 H0.6 Z" fill="#e8923a" stroke="#a5601a" stroke-width="0.6" stroke-linejoin="round"/></svg>
<svg style="left:1401px;top:76.2px;" width="18" height="18" viewBox="0 0 18 18"><defs><radialGradient id="ts3" cx="38%" cy="30%" r="72%"><stop offset="0" stop-color="#c9c9c9"/><stop offset="0.5" stop-color="#8a8a8a"/><stop offset="1" stop-color="#404040"/></radialGradient>
<pattern id="ts3p" width="4" height="4" patternUnits="userSpaceOnUse"><rect width="4" height="4" fill="#59626c"/><rect width="2" height="2" fill="#6f7883"/><rect x="2" y="2" width="2" height="2" fill="#6f7883"/></pattern></defs>
<rect width="18" height="18" fill="url(#ts3p)"/><circle cx="9" cy="9" r="8.2" fill="url(#ts3)"/></svg>
<svg style="left:1423px;top:78.6px;" width="15" height="14" viewBox="0 0 15 14"><path d="M7.5 1 L14.4 13 H0.6 Z" fill="#e8923a" stroke="#a5601a" stroke-width="0.6" stroke-linejoin="round"/></svg>
<svg style="left:1441px;top:76.2px;" width="18" height="18" viewBox="0 0 18 18"><defs><radialGradient id="ts4" cx="38%" cy="30%" r="72%"><stop offset="0" stop-color="#777"/><stop offset="0.5" stop-color="#3e3e3e"/><stop offset="1" stop-color="#191919"/></radialGradient>
<pattern id="ts4p" width="4" height="4" patternUnits="userSpaceOnUse"><rect width="4" height="4" fill="#59626c"/><rect width="2" height="2" fill="#6f7883"/><rect x="2" y="2" width="2" height="2" fill="#6f7883"/></pattern></defs>
<rect width="18" height="18" fill="url(#ts4p)"/><circle cx="9" cy="9" r="8.2" fill="url(#ts4)"/><rect x="0.5" y="0.5" width="17" height="17" fill="none" stroke="#f0a040" stroke-width="1"/></svg>
<svg style="left:1462.5px;top:78.6px;" width="15" height="14" viewBox="0 0 15 14"><path d="M7.5 1 L14.4 13 H0.6 Z" fill="#e8923a" stroke="#a5601a" stroke-width="0.6" stroke-linejoin="round"/></svg>
<svg style="left:1341px;top:96.2px;" width="18" height="18" viewBox="0 0 18 18"><defs><radialGradient id="ts5" cx="38%" cy="30%" r="72%"><stop offset="0" stop-color="#777"/><stop offset="0.5" stop-color="#3e3e3e"/><stop offset="1" stop-color="#191919"/></radialGradient>
<pattern id="ts5p" width="4" height="4" patternUnits="userSpaceOnUse"><rect width="4" height="4" fill="#59626c"/><rect width="2" height="2" fill="#6f7883"/><rect x="2" y="2" width="2" height="2" fill="#6f7883"/></pattern></defs>
<rect width="18" height="18" fill="url(#ts5p)"/><circle cx="9" cy="9" r="8.2" fill="url(#ts5)"/></svg>
<div style="left:1578px;top:50px;width:22px;height:810px;background:#2f2f2f;"></div>
<div style="left:1578px;top:50.5px;width:21px;height:46px;background:#424242;border-radius:0 3px 3px 0;"></div>
<div style="left:1578px;top:422.5px;width:21px;height:59px;background:#424242;border-radius:0 3px 3px 0;"></div>
<span style="left:1588.5px;top:56px;line-height:16px;font-size:11.2px;letter-spacing:-0.15px;color:#e2e2e2;transform-origin:0 0;transform:rotate(90deg) translate(0,-8px);">Objects</span>
<span style="left:1588.5px;top:105px;line-height:16px;font-size:11.2px;letter-spacing:-0.15px;color:#8e8e8e;transform-origin:0 0;transform:rotate(90deg) translate(0,-8px);">Takes</span>
<span style="left:1588.5px;top:144px;line-height:16px;font-size:11.2px;letter-spacing:-0.15px;color:#8e8e8e;transform-origin:0 0;transform:rotate(90deg) translate(0,-8px);">Content Browser</span>
<span style="left:1588.5px;top:428.5px;line-height:16px;font-size:11.2px;letter-spacing:-0.15px;color:#e2e2e2;transform-origin:0 0;transform:rotate(90deg) translate(0,-8px);">Attributes</span>
<span style="left:1588.5px;top:489px;line-height:16px;font-size:11.2px;letter-spacing:-0.15px;color:#8e8e8e;transform-origin:0 0;transform:rotate(90deg) translate(0,-8px);">Layers</span>
<span style="left:1588.5px;top:531px;line-height:16px;font-size:11.2px;letter-spacing:-0.15px;color:#8e8e8e;transform-origin:0 0;transform:rotate(90deg) translate(0,-8px);">Structure</span>
<div style="left:1170px;top:422px;width:408px;height:440px;background:#3d3d3d;box-sizing:border-box;border:1px solid #505050;"></div>
<div style="left:1177px;top:428.8px;width:14px;height:2px;background:#b4b4b4;"></div>
<div style="left:1177px;top:432.8px;width:14px;height:2px;background:#b4b4b4;"></div>
<div style="left:1177px;top:436.8px;width:14px;height:2px;background:#b4b4b4;"></div>
<span style="left:1201.4px;top:426.0px;line-height:16px;font-size:11px;color:#d2d2d2;letter-spacing:-0.310px;">Mode</span>
<span style="left:1244.4px;top:426.0px;line-height:16px;font-size:11px;color:#d2d2d2;letter-spacing:-0.213px;">Edit</span>
<span style="left:1277.4px;top:426.0px;line-height:16px;font-size:11px;color:#d2d2d2;letter-spacing:-0.248px;">User Data</span>
<div style="left:1171px;top:445.5px;width:406px;height:1px;background:#4a4a4a;"></div>
<svg style="left:1438px;top:425px;" width="140" height="18" viewBox="0 0 140 18">
<g fill="none" stroke-linecap="butt">
<path d="M2 9 H17 M8 3 L2 9 L8 15" stroke="#9a9a9a" stroke-width="1.7"/>
<path d="M22 9 H36 M30 4 L36 9 L30 14" stroke="#5e5e5e" stroke-width="1.3"/>
<path d="M48.5 17 V2.4 M43 8 L48.5 2.4 L54 8" stroke="#9a9a9a" stroke-width="1.7"/>
<circle cx="67.6" cy="5.8" r="3.7" stroke="#858585" stroke-width="1.3"/><path d="M70.2 8.8 L74.4 14.2" stroke="#858585" stroke-width="2.2" stroke-linecap="round"/>
<rect x="83.6" y="8" width="10.8" height="8" stroke="#858585" stroke-width="1.3"/><path d="M86 8 V5 A3 3 0 0 1 92 4.2" stroke="#858585" stroke-width="1.3"/>
<circle cx="108.6" cy="9" r="6.8" stroke="#858585" stroke-width="1.2"/><circle cx="108.6" cy="9" r="2.2" stroke="#858585" stroke-width="1.2"/>
<rect x="123.6" y="1.6" width="11.4" height="14.2" stroke="#858585" stroke-width="1.2"/><path d="M129.3 5.4 V12 M126 8.7 H132.6" stroke="#858585" stroke-width="1.8"/>
</g><circle cx="89" cy="12" r="1" fill="#858585"/></svg>
<svg style="left:1173px;top:449px;" width="22" height="22" viewBox="0 0 22 22"><defs><radialGradient id="mt1" cx="38%" cy="30%" r="72%"><stop offset="0" stop-color="#777"/><stop offset="0.5" stop-color="#3e3e3e"/><stop offset="1" stop-color="#191919"/></radialGradient>
<pattern id="mt1p" width="4" height="4" patternUnits="userSpaceOnUse"><rect width="4" height="4" fill="#59626c"/><rect width="2" height="2" fill="#6f7883"/><rect x="2" y="2" width="2" height="2" fill="#6f7883"/></pattern></defs>
<rect width="22" height="22" fill="url(#mt1p)"/><circle cx="11" cy="11" r="10.2" fill="url(#mt1)"/></svg>
<span style="left:1199px;top:452.0px;line-height:16px;font-size:11px;color:#d2d2d2;letter-spacing:-0.000px;">Material Tag [Material]</span>
<div style="left:1174px;top:474px;width:67px;height:18px;background:#555;border-radius:2px 0 0 2px;"></div>
<div style="left:1241px;top:474px;width:66.5px;height:18px;background:#8ba9dd;"></div>
<div style="left:1307.5px;top:474px;width:66.5px;height:18px;background:#555;border-radius:0 2px 2px 0;"></div>
<span style="left:1193.15599609375px;top:476.0px;line-height:16px;font-size:11px;color:#d2d2d2;letter-spacing:-0.242px;">Basic</span>
<span style="left:1264.5318359375px;top:476.0px;line-height:16px;font-size:11px;color:#10182e;letter-spacing:-0.266px;">Tag</span>
<span style="left:1311px;top:476.0px;line-height:16px;font-size:11px;color:#d2d2d2;letter-spacing:-0.028px;">Coordinates</span>
<span style="left:1175px;top:500.0px;line-height:16px;font-size:11.5px;color:#f0f0f0;letter-spacing:-0.333px;font-weight:bold;">Tag Properties</span>
<svg style="left:1174px;top:521px;" width="16" height="16" viewBox="0 0 16 16"><circle cx="8" cy="8" r="6.9" fill="#6f6f6f"/><circle cx="8" cy="8" r="5.2" fill="#2b2b2b"/><circle cx="8" cy="8" r="3.7" fill="#9a9a9a"/></svg>
<svg style="left:1174px;top:542px;" width="16" height="16" viewBox="0 0 16 16"><circle cx="8" cy="8" r="6.9" fill="#6f6f6f"/><circle cx="8" cy="8" r="5.2" fill="#2b2b2b"/><circle cx="8" cy="8" r="3.7" fill="#9a9a9a"/></svg>
<svg style="left:1174px;top:563px;" width="16" height="16" viewBox="0 0 16 16"><circle cx="8" cy="8" r="6.9" fill="#6f6f6f"/><circle cx="8" cy="8" r="5.2" fill="#2b2b2b"/><circle cx="8" cy="8" r="3.7" fill="#9a9a9a"/></svg>
<svg style="left:1174px;top:583px;" width="16" height="16" viewBox="0 0 16 16"><circle cx="8" cy="8" r="6.9" fill="#6f6f6f"/><circle cx="8" cy="8" r="5.2" fill="#2b2b2b"/><circle cx="8" cy="8" r="3.7" fill="#9a9a9a"/></svg>
<svg style="left:1174px;top:603px;" width="16" height="16" viewBox="0 0 16 16"><circle cx="8" cy="8" r="6.9" fill="#6f6f6f"/><circle cx="8" cy="8" r="5.2" fill="#2b2b2b"/><circle cx="8" cy="8" r="3.7" fill="#9a9a9a"/></svg>
<svg style="left:1197px;top:524px;" width="8" height="10" viewBox="0 0 8 10"><path d="M2 1.6 L5.6 5 L2 8.4" fill="none" stroke="#a0a0a0" stroke-width="1.2"/></svg>
<span style="left:1208px;top:521.0px;line-height:16px;font-size:11px;color:#d2d2d2;letter-spacing:-0.015px;">Material</span>
<svg style="left:1190px;top:531.8px;" width="240" height="2" viewBox="0 0 240 2"><rect x="95.7" y="0.5" width="1.6" height="1" fill="#a0a0a0"/><rect x="88.6" y="0.5" width="1.6" height="1" fill="#a0a0a0"/><rect x="81.5" y="0.5" width="1.6" height="1" fill="#a0a0a0"/><rect x="74.4" y="0.5" width="1.6" height="1" fill="#a0a0a0"/><rect x="67.3" y="0.5" width="1.6" height="1" fill="#a0a0a0"/><rect x="60.2" y="0.5" width="1.6" height="1" fill="#a0a0a0"/></svg>
<span style="left:1197px;top:542.0px;line-height:16px;font-size:11px;color:#d2d2d2;letter-spacing:-0.139px;">Selection</span>
<svg style="left:1190px;top:552.8px;" width="240" height="2" viewBox="0 0 240 2"><rect x="95.7" y="0.5" width="1.6" height="1" fill="#a0a0a0"/><rect x="88.6" y="0.5" width="1.6" height="1" fill="#a0a0a0"/><rect x="81.5" y="0.5" width="1.6" height="1" fill="#a0a0a0"/><rect x="74.4" y="0.5" width="1.6" height="1" fill="#a0a0a0"/><rect x="67.3" y="0.5" width="1.6" height="1" fill="#a0a0a0"/><rect x="60.2" y="0.5" width="1.6" height="1" fill="#a0a0a0"/><rect x="53.1" y="0.5" width="1.6" height="1" fill="#a0a0a0"/></svg>
<span style="left:1197px;top:563.0px;line-height:16px;font-size:11px;color:#d2d2d2;letter-spacing:0.009px;">Projection</span>
<svg style="left:1190px;top:573.8px;" width="240" height="2" viewBox="0 0 240 2"><rect x="95.7" y="0.5" width="1.6" height="1" fill="#a0a0a0"/><rect x="88.6" y="0.5" width="1.6" height="1" fill="#a0a0a0"/><rect x="81.5" y="0.5" width="1.6" height="1" fill="#a0a0a0"/><rect x="74.4" y="0.5" width="1.6" height="1" fill="#a0a0a0"/><rect x="67.3" y="0.5" width="1.6" height="1" fill="#a0a0a0"/><rect x="60.2" y="0.5" width="1.6" height="1" fill="#a0a0a0"/></svg>
<span style="left:1197px;top:583.0px;line-height:16px;font-size:11px;color:#d2d2d2;letter-spacing:-0.057px;">Projection Display</span>
<span style="left:1197px;top:603.0px;line-height:16px;font-size:11px;color:#d2d2d2;letter-spacing:-0.254px;">Side</span>
<svg style="left:1190px;top:613.8px;" width="240" height="2" viewBox="0 0 240 2"><rect x="95.7" y="0.5" width="1.6" height="1" fill="#a0a0a0"/><rect x="88.6" y="0.5" width="1.6" height="1" fill="#a0a0a0"/><rect x="81.5" y="0.5" width="1.6" height="1" fill="#a0a0a0"/><rect x="74.4" y="0.5" width="1.6" height="1" fill="#a0a0a0"/><rect x="67.3" y="0.5" width="1.6" height="1" fill="#a0a0a0"/><rect x="60.2" y="0.5" width="1.6" height="1" fill="#a0a0a0"/><rect x="53.1" y="0.5" width="1.6" height="1" fill="#a0a0a0"/><rect x="46.0" y="0.5" width="1.6" height="1" fill="#a0a0a0"/><rect x="38.9" y="0.5" width="1.6" height="1" fill="#a0a0a0"/><rect x="31.8" y="0.5" width="1.6" height="1" fill="#a0a0a0"/></svg>
<div style="left:1296.5px;top:521.3px;width:242.5px;height:14.2px;background:#2b2b2b;border-radius:3px 0 0 3px;box-shadow:0 0 0 1px #474747;"></div>
<span style="left:1303px;top:521.0px;line-height:16px;font-size:11px;color:#dcdcdc;transform-origin:0 50%;transform:scaleX(0.8643);">DARK GREY</span>
<svg style="left:1522px;top:520.6px;" width="16" height="16" viewBox="0 0 16 16"><defs><radialGradient id="mt2" cx="38%" cy="30%" r="72%"><stop offset="0" stop-color="#777"/><stop offset="0.5" stop-color="#3e3e3e"/><stop offset="1" stop-color="#191919"/></radialGradient></defs>
<rect width="16" height="16" fill="#5d6670"/><circle cx="8" cy="8" r="7.4" fill="url(#mt2)"/></svg>
<div style="left:1539px;top:520.5px;width:11.5px;height:16px;background:#575757;border-radius:0 3px 3px 0;"></div>
<svg style="left:1538.6px;top:524.4px;" width="12" height="10" viewBox="0 0 12 10"><path d="M3.4 3.7 L6 6.3 L8.6 3.7" fill="none" stroke="#d0d0d0" stroke-width="1.2"/></svg>
<svg style="left:1552px;top:519.5px;" width="20" height="20" viewBox="0 0 20 20"><circle cx="10" cy="10" r="8.6" fill="none" stroke="#9a9a9a" stroke-width="1.2"/><path d="M6.4 5.8 L14 8.6 L11.2 10 L14.4 13.6 L13.2 14.6 L10 11.2 L8.8 13.8 Z" fill="#9a9a9a"/></svg>
<div style="left:1296.5px;top:541.3px;width:275px;height:15.5px;background:#2b2b2b;border-radius:3px;box-shadow:0 0 0 1px #474747;"></div>
<span style="left:1301px;top:542.0px;line-height:16px;font-size:11px;color:#dcdcdc;letter-spacing:-0.170px;">Polygon Selection.3</span>
<div style="left:1296px;top:562.0px;width:275.5px;height:16.8px;background:#575757;border-radius:3px;"></div>
<span style="left:1303px;top:562.8px;line-height:16px;font-size:11px;color:#dcdcdc;letter-spacing:0.008px;">UVW Mapping</span>
<svg style="left:1557px;top:565.6px;" width="12" height="10" viewBox="0 0 12 10"><path d="M3.0 3.5 L6 6.5 L9.0 3.5" fill="none" stroke="#d0d0d0" stroke-width="1.3"/></svg>
<div style="left:1296px;top:582.2px;width:275.5px;height:16.8px;background:#575757;border-radius:3px;"></div>
<span style="left:1303px;top:583.0px;line-height:16px;font-size:11px;color:#dcdcdc;letter-spacing:-0.104px;">Simple</span>
<svg style="left:1557px;top:585.8000000000001px;" width="12" height="10" viewBox="0 0 12 10"><path d="M3.0 3.5 L6 6.5 L9.0 3.5" fill="none" stroke="#d0d0d0" stroke-width="1.3"/></svg>
<div style="left:1296px;top:602.4px;width:275.5px;height:16.8px;background:#575757;border-radius:3px;"></div>
<span style="left:1303px;top:603.1999999999999px;line-height:16px;font-size:11px;color:#dcdcdc;letter-spacing:-0.157px;">Both</span>
<svg style="left:1557px;top:606.0px;" width="12" height="10" viewBox="0 0 12 10"><path d="M3.0 3.5 L6 6.5 L9.0 3.5" fill="none" stroke="#d0d0d0" stroke-width="1.3"/></svg>
<div style="left:1172px;top:623px;width:402px;height:1px;background:#4a4a4a;"></div>
<svg style="left:1174px;top:630px;" width="16" height="16" viewBox="0 0 16 16"><circle cx="8" cy="8" r="6.9" fill="#6f6f6f"/><circle cx="8" cy="8" r="5.2" fill="#2b2b2b"/><circle cx="8" cy="8" r="3.7" fill="#9a9a9a"/></svg>
<span style="left:1197px;top:630.0px;line-height:16px;font-size:11px;color:#d2d2d2;letter-spacing:0.063px;">Add Material</span>
<svg style="left:1190px;top:640.8px;" width="240" height="2" viewBox="0 0 240 2"><rect x="95.7" y="0.5" width="1.6" height="1" fill="#a0a0a0"/><rect x="88.6" y="0.5" width="1.6" height="1" fill="#a0a0a0"/><rect x="81.5" y="0.5" width="1.6" height="1" fill="#a0a0a0"/><rect x="74.4" y="0.5" width="1.6" height="1" fill="#a0a0a0"/></svg>
<svg style="left:1295px;top:631.1px;" width="13" height="13" viewBox="0 0 13 13"><rect x="0.5" y="0.5" width="12" height="12" rx="1.5" fill="#3a3a3a" stroke="#747474" stroke-width="1"/></svg>
<svg style="left:1174px;top:649.8px;" width="16" height="16" viewBox="0 0 16 16"><circle cx="8" cy="8" r="6.9" fill="#6f6f6f"/><circle cx="8" cy="8" r="5.2" fill="#2b2b2b"/><circle cx="8" cy="8" r="3.7" fill="#9a9a9a"/></svg>
<span style="left:1197px;top:649.8px;line-height:16px;font-size:11px;color:#d2d2d2;letter-spacing:-0.079px;">Tile</span>
<svg style="left:1190px;top:660.5999999999999px;" width="240" height="2" viewBox="0 0 240 2"><rect x="95.7" y="0.5" width="1.6" height="1" fill="#a0a0a0"/><rect x="88.6" y="0.5" width="1.6" height="1" fill="#a0a0a0"/><rect x="81.5" y="0.5" width="1.6" height="1" fill="#a0a0a0"/><rect x="74.4" y="0.5" width="1.6" height="1" fill="#a0a0a0"/><rect x="67.3" y="0.5" width="1.6" height="1" fill="#a0a0a0"/><rect x="60.2" y="0.5" width="1.6" height="1" fill="#a0a0a0"/><rect x="53.1" y="0.5" width="1.6" height="1" fill="#a0a0a0"/><rect x="46.0" y="0.5" width="1.6" height="1" fill="#a0a0a0"/><rect x="38.9" y="0.5" width="1.6" height="1" fill="#a0a0a0"/><rect x="31.8" y="0.5" width="1.6" height="1" fill="#a0a0a0"/><rect x="24.7" y="0.5" width="1.6" height="1" fill="#a0a0a0"/></svg>
<svg style="left:1295px;top:650.9px;" width="13" height="13" viewBox="0 0 13 13"><rect x="0.5" y="0.5" width="12" height="12" rx="1.5" fill="#cdcdcd" stroke="#e0e0e0" stroke-width="0.6"/><path d="M2.8 6.6 L5.4 9.2 L10.2 3.6" fill="none" stroke="#141414" stroke-width="1.8"/></svg>
<svg style="left:1174px;top:670px;" width="16" height="16" viewBox="0 0 16 16"><circle cx="8" cy="8" r="6.9" fill="#6f6f6f"/><circle cx="8" cy="8" r="5.2" fill="#2b2b2b"/><circle cx="8" cy="8" r="3.7" fill="#9a9a9a"/></svg>
<span style="left:1197px;top:670.0px;line-height:16px;font-size:11px;color:#d2d2d2;letter-spacing:-0.412px;">Seamless</span>
<svg style="left:1190px;top:680.8px;" width="240" height="2" viewBox="0 0 240 2"><rect x="95.7" y="0.5" width="1.6" height="1" fill="#a0a0a0"/><rect x="88.6" y="0.5" width="1.6" height="1" fill="#a0a0a0"/><rect x="81.5" y="0.5" width="1.6" height="1" fill="#a0a0a0"/><rect x="74.4" y="0.5" width="1.6" height="1" fill="#a0a0a0"/><rect x="67.3" y="0.5" width="1.6" height="1" fill="#a0a0a0"/><rect x="60.2" y="0.5" width="1.6" height="1" fill="#a0a0a0"/><rect x="53.1" y="0.5" width="1.6" height="1" fill="#a0a0a0"/></svg>
<svg style="left:1295px;top:671.1px;" width="13" height="13" viewBox="0 0 13 13"><rect x="0.5" y="0.5" width="12" height="12" rx="1.5" fill="#3a3a3a" stroke="#747474" stroke-width="1"/></svg>
<svg style="left:1174px;top:690px;" width="16" height="16" viewBox="0 0 16 16"><circle cx="8" cy="8" r="6.9" fill="#6f6f6f"/><circle cx="8" cy="8" r="5.2" fill="#2b2b2b"/><circle cx="8" cy="8" r="3.7" fill="#9a9a9a"/></svg>
<span style="left:1197px;top:690.0px;line-height:16px;font-size:11px;color:#d2d2d2;letter-spacing:-0.123px;">Use UVW for Bump</span>
<svg style="left:1295px;top:691.1px;" width="13" height="13" viewBox="0 0 13 13"><rect x="0.5" y="0.5" width="12" height="12" rx="1.5" fill="#cdcdcd" stroke="#e0e0e0" stroke-width="0.6"/><path d="M2.8 6.6 L5.4 9.2 L10.2 3.6" fill="none" stroke="#141414" stroke-width="1.8"/></svg>
<div style="left:1172px;top:710px;width:402px;height:1px;background:#4a4a4a;"></div>
<svg style="left:1174px;top:718px;" width="16" height="16" viewBox="0 0 16 16"><circle cx="8" cy="8" r="6.9" fill="#6f6f6f"/><circle cx="8" cy="8" r="5.2" fill="#2b2b2b"/><circle cx="8" cy="8" r="3.7" fill="#9a9a9a"/></svg>
<svg style="left:1335px;top:718px;" width="16" height="16" viewBox="0 0 16 16"><circle cx="8" cy="8" r="6.9" fill="#6f6f6f"/><circle cx="8" cy="8" r="5.2" fill="#2b2b2b"/><circle cx="8" cy="8" r="3.7" fill="#9a9a9a"/></svg>
<span style="left:1197px;top:718.0px;line-height:16px;font-size:11px;color:#d2d2d2;letter-spacing:-0.018px;">Offset U</span>
<span style="left:1358px;top:718.0px;line-height:16px;font-size:11px;color:#d2d2d2;letter-spacing:0.058px;">Offset V</span>
<svg style="left:1190px;top:728.8px;" width="240" height="2" viewBox="0 0 240 2"><rect x="67.8" y="0.5" width="1.6" height="1" fill="#a0a0a0"/><rect x="60.7" y="0.5" width="1.6" height="1" fill="#a0a0a0"/><rect x="53.6" y="0.5" width="1.6" height="1" fill="#a0a0a0"/><rect x="228.6" y="0.5" width="1.6" height="1" fill="#a0a0a0"/><rect x="221.5" y="0.5" width="1.6" height="1" fill="#a0a0a0"/><rect x="214.4" y="0.5" width="1.6" height="1" fill="#a0a0a0"/></svg>
<div style="left:1267.5px;top:718.1px;width:65.5px;height:15px;background:#2b2b2b;border-radius:3px;box-shadow:0 0 0 1px #474747;"></div>
<span style="left:1272px;top:718.2px;line-height:16px;font-size:11px;color:#dcdcdc;letter-spacing:-0.284px;">0 %</span>
<svg style="left:1323px;top:718px;" width="10" height="16" viewBox="0 0 10 16"><path d="M2 6 L5 3 L8 6 M2 10 L5 13 L8 10" fill="none" stroke="#808080" stroke-width="1"/></svg>
<div style="left:1428.5px;top:718.1px;width:65.5px;height:15px;background:#2b2b2b;border-radius:3px;box-shadow:0 0 0 1px #474747;"></div>
<span style="left:1433px;top:718.2px;line-height:16px;font-size:11px;color:#dcdcdc;letter-spacing:-0.284px;">0 %</span>
<svg style="left:1484px;top:718px;" width="10" height="16" viewBox="0 0 10 16"><path d="M2 6 L5 3 L8 6 M2 10 L5 13 L8 10" fill="none" stroke="#808080" stroke-width="1"/></svg>
<svg style="left:1174px;top:740px;" width="16" height="16" viewBox="0 0 16 16"><circle cx="8" cy="8" r="6.9" fill="#6f6f6f"/><circle cx="8" cy="8" r="5.2" fill="#2b2b2b"/><circle cx="8" cy="8" r="3.7" fill="#9a9a9a"/></svg>
<svg style="left:1335px;top:740px;" width="16" height="16" viewBox="0 0 16 16"><circle cx="8" cy="8" r="6.9" fill="#6f6f6f"/><circle cx="8" cy="8" r="5.2" fill="#2b2b2b"/><circle cx="8" cy="8" r="3.7" fill="#9a9a9a"/></svg>
<span style="left:1197px;top:740.0px;line-height:16px;font-size:11px;color:#d2d2d2;letter-spacing:-0.205px;">Length U</span>
<span style="left:1358px;top:740.0px;line-height:16px;font-size:11px;color:#d2d2d2;letter-spacing:-0.129px;">Length V</span>
<svg style="left:1190px;top:750.8px;" width="240" height="2" viewBox="0 0 240 2"><rect x="67.8" y="0.5" width="1.6" height="1" fill="#a0a0a0"/><rect x="60.7" y="0.5" width="1.6" height="1" fill="#a0a0a0"/><rect x="53.6" y="0.5" width="1.6" height="1" fill="#a0a0a0"/><rect x="228.6" y="0.5" width="1.6" height="1" fill="#a0a0a0"/><rect x="221.5" y="0.5" width="1.6" height="1" fill="#a0a0a0"/><rect x="214.4" y="0.5" width="1.6" height="1" fill="#a0a0a0"/></svg>
<div style="left:1267.5px;top:740.1px;width:65.5px;height:15px;background:#2b2b2b;border-radius:3px;box-shadow:0 0 0 1px #474747;"></div>
<span style="left:1272px;top:740.2px;line-height:16px;font-size:11px;color:#dcdcdc;letter-spacing:-0.281px;">100 %</span>
<svg style="left:1323px;top:740px;" width="10" height="16" viewBox="0 0 10 16"><path d="M2 6 L5 3 L8 6 M2 10 L5 13 L8 10" fill="none" stroke="#808080" stroke-width="1"/></svg>
<div style="left:1428.5px;top:740.1px;width:65.5px;height:15px;background:#2b2b2b;border-radius:3px;box-shadow:0 0 0 1px #474747;"></div>
<span style="left:1433px;top:740.2px;line-height:16px;font-size:11px;color:#dcdcdc;letter-spacing:-0.281px;">100 %</span>
<svg style="left:1484px;top:740px;" width="10" height="16" viewBox="0 0 10 16"><path d="M2 6 L5 3 L8 6 M2 10 L5 13 L8 10" fill="none" stroke="#808080" stroke-width="1"/></svg>
<svg style="left:1174px;top:762px;" width="16" height="16" viewBox="0 0 16 16"><circle cx="8" cy="8" r="6.9" fill="#6f6f6f"/><circle cx="8" cy="8" r="5.2" fill="#2b2b2b"/><circle cx="8" cy="8" r="3.7" fill="#9a9a9a"/></svg>
<svg style="left:1335px;top:762px;" width="16" height="16" viewBox="0 0 16 16"><circle cx="8" cy="8" r="6.9" fill="#6f6f6f"/><circle cx="8" cy="8" r="5.2" fill="#2b2b2b"/><circle cx="8" cy="8" r="3.7" fill="#9a9a9a"/></svg>
<span style="left:1197px;top:762.0px;line-height:16px;font-size:11px;color:#d2d2d2;letter-spacing:-0.259px;">Tiles U</span>
<span style="left:1358px;top:762.0px;line-height:16px;font-size:11px;color:#d2d2d2;letter-spacing:-0.173px;">Tiles V</span>
<svg style="left:1190px;top:772.8px;" width="240" height="2" viewBox="0 0 240 2"><rect x="67.8" y="0.5" width="1.6" height="1" fill="#a0a0a0"/><rect x="60.7" y="0.5" width="1.6" height="1" fill="#a0a0a0"/><rect x="53.6" y="0.5" width="1.6" height="1" fill="#a0a0a0"/><rect x="46.5" y="0.5" width="1.6" height="1" fill="#a0a0a0"/><rect x="228.6" y="0.5" width="1.6" height="1" fill="#a0a0a0"/><rect x="221.5" y="0.5" width="1.6" height="1" fill="#a0a0a0"/><rect x="214.4" y="0.5" width="1.6" height="1" fill="#a0a0a0"/><rect x="207.3" y="0.5" width="1.6" height="1" fill="#a0a0a0"/></svg>
<div style="left:1267.5px;top:762.1px;width:65.5px;height:15px;background:#2b2b2b;border-radius:3px;box-shadow:0 0 0 1px #474747;"></div>
<span style="left:1272px;top:762.2px;line-height:16px;font-size:11px;color:#dcdcdc;letter-spacing:-0.275px;">1</span>
<svg style="left:1323px;top:762px;" width="10" height="16" viewBox="0 0 10 16"><path d="M2 6 L5 3 L8 6 M2 10 L5 13 L8 10" fill="none" stroke="#808080" stroke-width="1"/></svg>
<div style="left:1428.5px;top:762.1px;width:65.5px;height:15px;background:#2b2b2b;border-radius:3px;box-shadow:0 0 0 1px #474747;"></div>
<span style="left:1433px;top:762.2px;line-height:16px;font-size:11px;color:#dcdcdc;letter-spacing:-0.275px;">1</span>
<svg style="left:1484px;top:762px;" width="10" height="16" viewBox="0 0 10 16"><path d="M2 6 L5 3 L8 6 M2 10 L5 13 L8 10" fill="none" stroke="#808080" stroke-width="1"/></svg>
<svg style="left:1174px;top:784px;" width="16" height="16" viewBox="0 0 16 16"><circle cx="8" cy="8" r="6.9" fill="#6f6f6f"/><circle cx="8" cy="8" r="5.2" fill="#2b2b2b"/><circle cx="8" cy="8" r="3.7" fill="#9a9a9a"/></svg>
<svg style="left:1335px;top:784px;" width="16" height="16" viewBox="0 0 16 16"><circle cx="8" cy="8" r="6.9" fill="#6f6f6f"/><circle cx="8" cy="8" r="5.2" fill="#2b2b2b"/><circle cx="8" cy="8" r="3.7" fill="#9a9a9a"/></svg>
<span style="left:1197px;top:784.0px;line-height:16px;font-size:11px;color:#d2d2d2;letter-spacing:-0.079px;">Repetitions U</span>
<span style="left:1358px;top:784.0px;line-height:16px;font-size:11px;color:#d2d2d2;letter-spacing:-0.033px;">Repetitions V</span>
<div style="left:1267.5px;top:784.1px;width:65.5px;height:15px;background:#2b2b2b;border-radius:3px;box-shadow:0 0 0 1px #474747;"></div>
<span style="left:1272px;top:784.2px;line-height:16px;font-size:11px;color:#dcdcdc;letter-spacing:-0.275px;">0</span>
<svg style="left:1323px;top:784px;" width="10" height="16" viewBox="0 0 10 16"><path d="M2 6 L5 3 L8 6 M2 10 L5 13 L8 10" fill="none" stroke="#808080" stroke-width="1"/></svg>
<div style="left:1428.5px;top:784.1px;width:65.5px;height:15px;background:#2b2b2b;border-radius:3px;box-shadow:0 0 0 1px #474747;"></div>
<span style="left:1433px;top:784.2px;line-height:16px;font-size:11px;color:#dcdcdc;letter-spacing:-0.275px;">0</span>
<svg style="left:1484px;top:784px;" width="10" height="16" viewBox="0 0 10 16"><path d="M2 6 L5 3 L8 6 M2 10 L5 13 L8 10" fill="none" stroke="#808080" stroke-width="1"/></svg>
</body></html>
